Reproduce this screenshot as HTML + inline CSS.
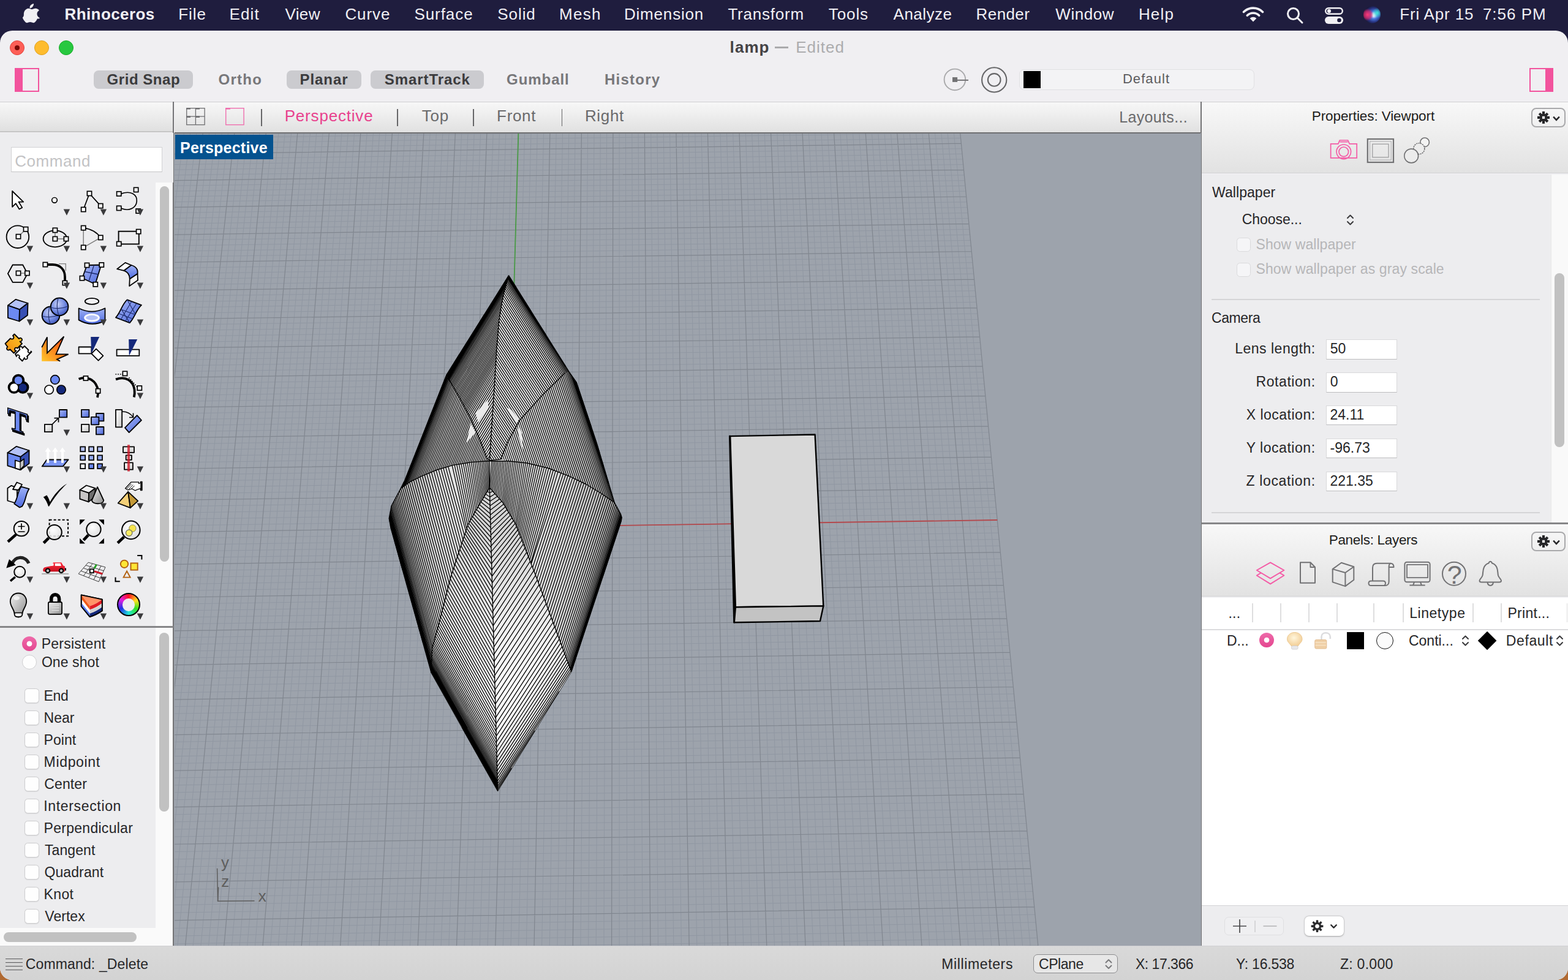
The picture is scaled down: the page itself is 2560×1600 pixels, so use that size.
<!DOCTYPE html>
<html><head><meta charset="utf-8"><title>Rhinoceros - lamp</title>
<style>
html,body{margin:0;padding:0;}
body{width:2560px;height:1600px;overflow:hidden;position:relative;background:#1f1d3e;font-family:"Liberation Sans",sans-serif;}
.t{position:absolute;white-space:pre;line-height:1;}
.b{position:absolute;box-sizing:border-box;}
svg{position:absolute;overflow:visible;}
</style></head><body>
<div class="b" style="left:0px;top:1560px;width:2560px;height:40px;background:#b06a32;"></div>
<div class="b" style="left:0px;top:50px;width:2560px;height:1550px;background:#f0eff2;border-radius:20px;"></div>
<svg style="left:38px;top:6px" width="26" height="32" viewBox="0 0 170 210"><path fill="#f1f0f4" d="M150.4 160.6c-3 7-6.600 13.400-10.700 19.300-5.600 8.100-10.300 13.700-13.800 16.800-5.500 5.100-11.500 7.700-17.800 7.900-4.600 0-10.100-1.300-16.500-3.900-6.400-2.600-12.300-3.900-17.700-3.900-5.600 0-11.700 1.300-18.200 3.900-6.500 2.600-11.700 4-15.700 4.100-6.100.3-12.200-2.400-18.200-8.100-3.900-3.400-8.700-9.200-14.600-17.400-6.200-8.800-11.400-19-15.400-30.600C7.500 136 5.400 123.800 5.400 112c0-13.500 2.900-25.100 8.700-34.900 4.600-7.800 10.700-14 18.300-18.500 7.600-4.500 15.900-6.800 24.700-7 4.900 0 11.200 1.500 19.200 4.500 7.900 3 13 4.500 15.200 4.500 1.700 0 7.300-1.800 16.900-5.300 9.100-3.300 16.700-4.600 23-4.100 17 1.400 29.800 8.100 38.300 20.200-15.200 9.200-22.700 22.100-22.600 38.700.1 12.900 4.800 23.600 14 32.100 4.200 4 8.800 7 14 9.200-1.100 3.300-2.300 6.400-3.600 9.400zM111.400 4.100c0 10.100-3.700 19.600-11.100 28.300C91.400 42.900 80.600 48.900 68.900 47.900c-.1-1.200-.2-2.500-.2-3.800 0-9.700 4.200-20.100 11.700-28.600 3.700-4.300 8.500-7.900 14.300-10.700 5.800-2.800 11.200-4.300 16.400-4.600.2 1.400.3 2.700.3 3.900z"/></svg>
<span class="t" style="left:105.50px;top:10.49px;font-size:26px;font-weight:700;color:#f1f0f4;letter-spacing:0.411px;">Rhinoceros</span>
<span class="t" style="left:291.20px;top:10.49px;font-size:26px;font-weight:400;color:#f1f0f4;letter-spacing:1.000px;">File</span>
<span class="t" style="left:374.40px;top:10.49px;font-size:26px;font-weight:400;color:#f1f0f4;letter-spacing:1.167px;">Edit</span>
<span class="t" style="left:465.40px;top:10.49px;font-size:26px;font-weight:400;color:#f1f0f4;letter-spacing:0.400px;">View</span>
<span class="t" style="left:563.40px;top:10.49px;font-size:26px;font-weight:400;color:#f1f0f4;letter-spacing:0.925px;">Curve</span>
<span class="t" style="left:676.40px;top:10.49px;font-size:26px;font-weight:400;color:#f1f0f4;letter-spacing:0.933px;">Surface</span>
<span class="t" style="left:812.30px;top:10.49px;font-size:26px;font-weight:400;color:#f1f0f4;letter-spacing:0.925px;">Solid</span>
<span class="t" style="left:912.90px;top:10.49px;font-size:26px;font-weight:400;color:#f1f0f4;letter-spacing:1.333px;">Mesh</span>
<span class="t" style="left:1018.90px;top:10.49px;font-size:26px;font-weight:400;color:#f1f0f4;letter-spacing:0.825px;">Dimension</span>
<span class="t" style="left:1188.40px;top:10.49px;font-size:26px;font-weight:400;color:#f1f0f4;letter-spacing:0.775px;">Transform</span>
<span class="t" style="left:1352.80px;top:10.49px;font-size:26px;font-weight:400;color:#f1f0f4;letter-spacing:0.900px;">Tools</span>
<span class="t" style="left:1458.60px;top:10.49px;font-size:26px;font-weight:400;color:#f1f0f4;letter-spacing:0.467px;">Analyze</span>
<span class="t" style="left:1593.60px;top:10.49px;font-size:26px;font-weight:400;color:#f1f0f4;letter-spacing:0.400px;">Render</span>
<span class="t" style="left:1723.30px;top:10.49px;font-size:26px;font-weight:400;color:#f1f0f4;letter-spacing:0.540px;">Window</span>
<span class="t" style="left:1858.90px;top:10.49px;font-size:26px;font-weight:400;color:#f1f0f4;letter-spacing:1.167px;">Help</span>
<span class="t" style="left:2285.20px;top:10.49px;font-size:26px;font-weight:400;color:#f1f0f4;letter-spacing:0.833px;">Fri Apr 15</span>
<span class="t" style="left:2420.90px;top:10.49px;font-size:26px;font-weight:400;color:#f1f0f4;letter-spacing:1.000px;">7:56 PM</span>
<svg style="left:2028px;top:10px" width="36" height="26" viewBox="0 0 36 26"><g fill="none" stroke="#f1f0f4" stroke-width="3.6" stroke-linecap="round"><path d="M2.500 9.500 A22 22 0 0 1 33.500 9.500"/><path d="M8.300 15.300 A13.800 13.800 0 0 1 27.700 15.300"/></g><path fill="#f1f0f4" d="M18 25.500 L12.600 20.100 A7.600 7.600 0 0 1 23.400 20.100 Z"/></svg>
<svg style="left:2100px;top:11px" width="28" height="28" viewBox="0 0 28 28"><g fill="none" stroke="#f1f0f4" stroke-width="3"><circle cx="11.500" cy="11.500" r="9"/><path d="M18 18 L26 26" stroke-linecap="round"/></g></svg>
<svg style="left:2163px;top:12px" width="30" height="27" viewBox="0 0 30 27"><rect x="1.200" y="1.200" width="27.600" height="9.600" rx="4.800" fill="none" stroke="#f1f0f4" stroke-width="2.400"/><circle cx="7" cy="6" r="3.100" fill="#f1f0f4"/><rect x="0" y="15" width="30" height="12" rx="6" fill="#f1f0f4"/><circle cx="23.500" cy="21" r="3.300" fill="#1f1d3e"/></svg>
<svg style="left:2226px;top:10px" width="28" height="28" viewBox="0 0 28 28"><defs><radialGradient id="si1" cx="0.6" cy="0.52" r="0.55"><stop offset="0" stop-color="#ffffff"/><stop offset="0.16" stop-color="#d9e4ff"/><stop offset="0.4" stop-color="#4a78e0"/><stop offset="0.75" stop-color="#27327e"/><stop offset="1" stop-color="#191a3c"/></radialGradient><radialGradient id="si2" cx="0.24" cy="0.5" r="0.36"><stop offset="0" stop-color="#ff3a78"/><stop offset="0.6" stop-color="#e02868" stop-opacity="0.7"/><stop offset="1" stop-color="#d02060" stop-opacity="0"/></radialGradient><radialGradient id="si3" cx="0.8" cy="0.4" r="0.3"><stop offset="0" stop-color="#40e8d8"/><stop offset="1" stop-color="#35e0d0" stop-opacity="0"/></radialGradient></defs><circle cx="14" cy="14" r="14" fill="url(#si1)"/><circle cx="14" cy="14" r="14" fill="url(#si2)"/><circle cx="14" cy="14" r="14" fill="url(#si3)"/></svg>
<div class="b" style="left:15.8px;top:65.7px;width:24px;height:24px;background:#fe5f57;border-radius:12px;border:1px solid #e0443e;"></div>
<div class="b" style="left:56.099999999999994px;top:65.7px;width:24px;height:24px;background:#febc2e;border-radius:12px;border:1px solid #dea123;"></div>
<div class="b" style="left:95.9px;top:65.7px;width:24px;height:24px;background:#28c840;border-radius:12px;border:1px solid #1aab29;"></div>
<div class="b" style="left:23.8px;top:73.7px;width:8px;height:8px;background:#7a0a06;border-radius:4px;"></div>
<span class="t" style="left:1191.60px;top:63.99px;font-size:26px;font-weight:700;color:#444345;letter-spacing:1.067px;">lamp</span>
<div class="b" style="left:1264.5px;top:76.3px;width:22.5px;height:2.6px;background:#aaaaac;"></div>
<span class="t" style="left:1299.20px;top:63.99px;font-size:26px;font-weight:400;color:#acacae;letter-spacing:1.020px;">Edited</span>
<div class="b" style="left:24px;top:111px;width:39.5px;height:38.5px;border:2.5px solid #f2539d;"></div>
<div class="b" style="left:24px;top:111px;width:12.5px;height:38.5px;background:#f2539d;"></div>
<div class="b" style="left:2497px;top:111px;width:38.5px;height:38.5px;border:2.5px solid #f2539d;"></div>
<div class="b" style="left:2523px;top:111px;width:12.5px;height:38.5px;background:#f2539d;"></div>
<div class="b" style="left:153px;top:114.8px;width:162px;height:30px;background:#cbcbcf;border-radius:8px;"></div>
<span class="t" style="left:174.60px;top:117.88px;font-size:24px;font-weight:700;color:#3b3b3d;letter-spacing:0.538px;">Grid Snap</span>
<span class="t" style="left:356.60px;top:117.88px;font-size:24px;font-weight:700;color:#77777a;letter-spacing:1.225px;">Ortho</span>
<div class="b" style="left:468px;top:114.8px;width:122px;height:30px;background:#cbcbcf;border-radius:8px;"></div>
<span class="t" style="left:489.40px;top:117.88px;font-size:24px;font-weight:700;color:#3b3b3d;letter-spacing:0.980px;">Planar</span>
<div class="b" style="left:605px;top:114.8px;width:185px;height:30px;background:#cbcbcf;border-radius:8px;"></div>
<span class="t" style="left:627.80px;top:117.88px;font-size:24px;font-weight:700;color:#3b3b3d;letter-spacing:0.933px;">SmartTrack</span>
<span class="t" style="left:827.10px;top:117.88px;font-size:24px;font-weight:700;color:#77777a;letter-spacing:0.933px;">Gumball</span>
<span class="t" style="left:986.90px;top:117.88px;font-size:24px;font-weight:700;color:#77777a;letter-spacing:1.250px;">History</span>
<svg style="left:1538px;top:108px" width="110" height="44" viewBox="1538 108 110 44"><circle cx="1558.900" cy="129.900" r="17.300" fill="none" stroke="#a9a9ab" stroke-width="1.900"/><rect x="1555" y="126.100" width="8.100" height="7.800" fill="#727274"/><path d="M1563 130.900H1581" stroke="#727274" stroke-width="2"/><circle cx="1623.200" cy="130.400" r="20.100" fill="none" stroke="#666668" stroke-width="2.100"/><circle cx="1623.200" cy="130.400" r="10.300" fill="none" stroke="#666668" stroke-width="2.100"/></svg>
<div class="b" style="left:1663.6px;top:112.8px;width:384.4px;height:34.4px;background:#f3f3f5;border:1.5px solid #e0e0e3;border-radius:8px;"></div>
<div class="b" style="left:1671px;top:116px;width:28px;height:28px;background:#000;"></div>
<span class="t" style="left:1832.90px;top:117.78px;font-size:22px;font-weight:400;color:#5c5c5e;letter-spacing:1.083px;">Default</span>
<div class="b" style="left:0px;top:165.5px;width:2560px;height:1.5px;background:#cfcfd1;"></div>
<div class="b" style="left:0px;top:167px;width:283px;height:49px;background:linear-gradient(#f7f7f7,#ececec 50%,#e0e0e0);border-bottom:2px solid #c6c6c6;"></div>
<div class="b" style="left:285px;top:167px;width:1675px;height:50px;background:linear-gradient(#f7f7f7,#ececec 50%,#e0e0e0);"></div>
<div class="b" style="left:282px;top:166px;width:2.2px;height:1378px;background:#747476;"></div>
<div class="b" style="left:1959.8px;top:166px;width:2.2px;height:1378px;background:#747476;"></div>
<svg style="left:304px;top:176px" width="32" height="29" viewBox="0 0 32 29"><g fill="none" stroke="#6e6e70" stroke-width="1.300"><rect x="0.700" y="0.700" width="29.400" height="27"/><path d="M15.400 0.700V27.700M0.700 14.200H30.100"/></g><g stroke="#6e6e70" stroke-width="2.400"><path d="M0.700 1.300H7M15.400 1.300H22M0.700 14.800H7M15.400 14.800H22"/></g></svg>
<svg style="left:368px;top:176px" width="32" height="29" viewBox="0 0 32 29"><rect x="0.700" y="0.700" width="29.400" height="27" fill="none" stroke="#ef6fae" stroke-width="1.400"/><path d="M0.700 1.400H8" stroke="#ef6fae" stroke-width="2.400"/></svg>
<div class="b" style="left:426.2px;top:178px;width:1.7px;height:27.5px;background:#666668;"></div>
<div class="b" style="left:648.2px;top:178px;width:1.7px;height:27.5px;background:#666668;"></div>
<div class="b" style="left:772.2px;top:178px;width:1.7px;height:27.5px;background:#666668;"></div>
<div class="b" style="left:916.5px;top:178px;width:1.7px;height:27.5px;background:#666668;"></div>
<span class="t" style="left:464.70px;top:176.19px;font-size:26px;font-weight:400;color:#e8418d;letter-spacing:0.810px;">Perspective</span>
<span class="t" style="left:688.70px;top:176.19px;font-size:26px;font-weight:400;color:#6a6a6c;letter-spacing:0.850px;">Top</span>
<span class="t" style="left:811.10px;top:176.19px;font-size:26px;font-weight:400;color:#6a6a6c;letter-spacing:0.675px;">Front</span>
<span class="t" style="left:954.90px;top:176.19px;font-size:26px;font-weight:400;color:#6a6a6c;letter-spacing:0.675px;">Right</span>
<span class="t" style="left:1827.30px;top:178.94px;font-size:25px;font-weight:400;color:#6a6a6c;letter-spacing:0.333px;">Layouts...</span>
<div class="b" style="left:0px;top:217px;width:254px;height:806px;background:#ededef;"></div>
<div class="b" style="left:254px;top:298px;width:26.5px;height:725px;background:#fafafa;"></div>
<div class="b" style="left:254px;top:217px;width:29px;height:81px;background:#ededef;"></div>
<div class="b" style="left:260.6px;top:304px;width:15.2px;height:613px;background:#c1c1c1;border-radius:8px;"></div>
<div class="b" style="left:17.5px;top:239.7px;width:247px;height:41px;background:#fff;border:1.5px solid #d2d2d4;border-bottom-color:#c4c4c6;"></div>
<span class="t" style="left:24.30px;top:250.19px;font-size:26px;font-weight:400;color:#c3c3c5;letter-spacing:0.533px;">Command</span>
<div class="b" style="left:0px;top:1022px;width:283px;height:3.2px;background:#868688;"></div>
<div class="b" style="left:0px;top:1025px;width:254px;height:489.5px;background:#ededef;"></div>
<div class="b" style="left:254px;top:1025px;width:28px;height:489.5px;background:#fafafa;"></div>
<div class="b" style="left:260px;top:1032.6px;width:15.8px;height:292.7px;background:#c1c1c1;border-radius:8px;"></div>
<div class="b" style="left:0px;top:1514.5px;width:282px;height:29.5px;background:#fafafa;"></div>
<div class="b" style="left:5.9px;top:1522px;width:217.3px;height:15.5px;background:#c1c1c1;border-radius:8px;"></div>
<div class="b" style="left:35.9px;top:1038.8000000000002px;width:24.2px;height:24.2px;background:radial-gradient(circle,#fff 0 4px,rgba(255,255,255,0) 4.800px),linear-gradient(#ee6aaa,#e4468f);border-radius:13px;"></div>
<div class="b" style="left:36px;top:1068.9px;width:24px;height:24px;background:#fdfdfd;border:1px solid #cfcfd1;border-radius:12px;"></div>
<span class="t" style="left:67.70px;top:1039.93px;font-size:23px;font-weight:400;color:#262628;letter-spacing:0.233px;">Persistent</span>
<span class="t" style="left:67.90px;top:1069.93px;font-size:23px;font-weight:400;color:#262628;letter-spacing:0.086px;">One shot</span>
<div class="b" style="left:40.3px;top:1124.3px;width:23.5px;height:23.4px;background:#fefefe;border:1px solid #cdcdcf;border-radius:5.500px;box-shadow:0 0.500px 1px rgba(0,0,0,0.08);"></div>
<span class="t" style="left:71.60px;top:1124.83px;font-size:23px;font-weight:400;color:#262628;letter-spacing:-0.350px;">End</span>
<div class="b" style="left:40.3px;top:1160.29px;width:23.5px;height:23.4px;background:#fefefe;border:1px solid #cdcdcf;border-radius:5.500px;box-shadow:0 0.500px 1px rgba(0,0,0,0.08);"></div>
<span class="t" style="left:71.60px;top:1160.82px;font-size:23px;font-weight:400;color:#262628;letter-spacing:-0.033px;">Near</span>
<div class="b" style="left:40.3px;top:1196.28px;width:23.5px;height:23.4px;background:#fefefe;border:1px solid #cdcdcf;border-radius:5.500px;box-shadow:0 0.500px 1px rgba(0,0,0,0.08);"></div>
<span class="t" style="left:71.60px;top:1196.81px;font-size:23px;font-weight:400;color:#262628;letter-spacing:0.025px;">Point</span>
<div class="b" style="left:40.3px;top:1232.27px;width:23.5px;height:23.4px;background:#fefefe;border:1px solid #cdcdcf;border-radius:5.500px;box-shadow:0 0.500px 1px rgba(0,0,0,0.08);"></div>
<span class="t" style="left:71.60px;top:1232.80px;font-size:23px;font-weight:400;color:#262628;letter-spacing:0.657px;">Midpoint</span>
<div class="b" style="left:40.3px;top:1268.26px;width:23.5px;height:23.4px;background:#fefefe;border:1px solid #cdcdcf;border-radius:5.500px;box-shadow:0 0.500px 1px rgba(0,0,0,0.08);"></div>
<span class="t" style="left:72.30px;top:1268.79px;font-size:23px;font-weight:400;color:#262628;letter-spacing:0.120px;">Center</span>
<div class="b" style="left:40.3px;top:1304.25px;width:23.5px;height:23.4px;background:#fefefe;border:1px solid #cdcdcf;border-radius:5.500px;box-shadow:0 0.500px 1px rgba(0,0,0,0.08);"></div>
<span class="t" style="left:71.30px;top:1304.78px;font-size:23px;font-weight:400;color:#262628;letter-spacing:0.655px;">Intersection</span>
<div class="b" style="left:40.3px;top:1340.24px;width:23.5px;height:23.4px;background:#fefefe;border:1px solid #cdcdcf;border-radius:5.500px;box-shadow:0 0.500px 1px rgba(0,0,0,0.08);"></div>
<span class="t" style="left:71.60px;top:1340.77px;font-size:23px;font-weight:400;color:#262628;letter-spacing:0.275px;">Perpendicular</span>
<div class="b" style="left:40.3px;top:1376.23px;width:23.5px;height:23.4px;background:#fefefe;border:1px solid #cdcdcf;border-radius:5.500px;box-shadow:0 0.500px 1px rgba(0,0,0,0.08);"></div>
<span class="t" style="left:72.90px;top:1376.76px;font-size:23px;font-weight:400;color:#262628;letter-spacing:0.100px;">Tangent</span>
<div class="b" style="left:40.3px;top:1412.22px;width:23.5px;height:23.4px;background:#fefefe;border:1px solid #cdcdcf;border-radius:5.500px;box-shadow:0 0.500px 1px rgba(0,0,0,0.08);"></div>
<span class="t" style="left:72.40px;top:1412.75px;font-size:23px;font-weight:400;color:#262628;letter-spacing:0.114px;">Quadrant</span>
<div class="b" style="left:40.3px;top:1448.21px;width:23.5px;height:23.4px;background:#fefefe;border:1px solid #cdcdcf;border-radius:5.500px;box-shadow:0 0.500px 1px rgba(0,0,0,0.08);"></div>
<span class="t" style="left:71.60px;top:1448.74px;font-size:23px;font-weight:400;color:#262628;letter-spacing:0.333px;">Knot</span>
<div class="b" style="left:40.3px;top:1484.2px;width:23.5px;height:23.4px;background:#fefefe;border:1px solid #cdcdcf;border-radius:5.500px;box-shadow:0 0.500px 1px rgba(0,0,0,0.08);"></div>
<span class="t" style="left:73.30px;top:1484.73px;font-size:23px;font-weight:400;color:#262628;letter-spacing:0.040px;">Vertex</span>
<div class="b" style="left:0px;top:1544px;width:2560px;height:56px;background:linear-gradient(#d9d9d9,#d3d3d3);border-top:1px solid #cfcfd3;border-radius:0 0 20px 20px;"></div>
<div class="b" style="left:8.6px;top:1564.5px;width:28.4px;height:1.5px;background:#5a5a5c;"></div>
<div class="b" style="left:8.6px;top:1570.5px;width:28.4px;height:1.5px;background:#5a5a5c;"></div>
<div class="b" style="left:8.6px;top:1576.5px;width:28.4px;height:1.5px;background:#5a5a5c;"></div>
<div class="b" style="left:8.6px;top:1582.5px;width:28.4px;height:1.5px;background:#5a5a5c;"></div>
<span class="t" style="left:41.80px;top:1562.63px;font-size:23px;font-weight:400;color:#262628;letter-spacing:0.140px;">Command: _Delete</span>
<span class="t" style="left:1537.20px;top:1563.23px;font-size:23px;font-weight:400;color:#262628;letter-spacing:0.630px;">Millimeters</span>
<div class="b" style="left:1686.7px;top:1558.2px;width:138.5px;height:30.8px;background:#e7e7e7;border:1.5px solid #8c8c8e;border-radius:7px;"></div>
<span class="t" style="left:1696.10px;top:1563.23px;font-size:23px;font-weight:400;color:#262628;letter-spacing:-0.460px;">CPlane</span>
<svg style="left:1802.500px;top:1562.700px" width="14" height="22" viewBox="0 0 14 22"><path d="M2.500 8.500L7 4L11.500 8.500M2.500 13.500L7 18L11.500 13.500" fill="none" stroke="#7a7a7c" stroke-width="2" stroke-linecap="round" stroke-linejoin="round"/></svg>
<span class="t" style="left:1854.00px;top:1563.23px;font-size:23px;font-weight:400;color:#262628;letter-spacing:-0.500px;">X: 17.366</span>
<span class="t" style="left:2017.90px;top:1563.23px;font-size:23px;font-weight:400;color:#262628;letter-spacing:-0.213px;">Y: 16.538</span>
<span class="t" style="left:2187.90px;top:1563.23px;font-size:23px;font-weight:400;color:#262628;letter-spacing:0.286px;">Z: 0.000</span>
<div class="b" style="left:1962.4px;top:167px;width:597.5999999999999px;height:116px;background:linear-gradient(#f8f8f8,#eeeeee 45%,#e2e2e2);border-bottom:1.500px solid #d2d2d4;"></div>
<span class="t" style="left:2141.80px;top:179.25px;font-size:22.5px;font-weight:400;color:#1e1e20;letter-spacing:-0.095px;">Properties: Viewport</span>
<div class="b" style="left:2500px;top:176.1px;width:55.8px;height:31.8px;border:2px solid #a9a9ab;border-radius:8px;"></div>
<svg style="left:2500px;top:176.1px" width="56" height="32" viewBox="0 0 56 32"><g fill="#262628"><circle cx="20" cy="15.9" r="6.300"/><rect x="17.9" y="5.9" width="4.200" height="20"/><rect x="10" y="13.8" width="20" height="4.200"/><rect x="17.9" y="6.300000000000001" width="4.200" height="19.200" transform="rotate(45 20 15.9)"/><rect x="17.9" y="6.300000000000001" width="4.200" height="19.200" transform="rotate(-45 20 15.9)"/></g><rect x="17.9" y="13.8" width="4.200" height="4.200" fill="#f4f4f4"/><path d="M37 15.500L41 19.800L45 15.500" fill="none" stroke="#262628" stroke-width="2.500" stroke-linecap="square" stroke-linejoin="miter"/></svg>
<svg style="left:2171px;top:226px" width="46" height="36" viewBox="2171 226 46 36"><g fill="none" stroke="#f45ba6" stroke-width="1.700"><path d="M2172.600 234.800H2184.800L2187.300 229H2200.600L2203.300 234.800H2215.200V257.800H2172.600Z"/><path d="M2187.300 231.600H2200.600"/><circle cx="2193.800" cy="247.800" r="11.800"/><circle cx="2193.800" cy="247.800" r="7.800"/></g></svg>
<svg style="left:2231px;top:225px" width="46" height="42" viewBox="2231 225 46 42"><g fill="none"><rect x="2232.800" y="227" width="42.200" height="38" stroke="#727274" stroke-width="2.200"/><rect x="2236.500" y="230.800" width="34.800" height="30.400" stroke="#b5b5b7" stroke-width="1.200"/><rect x="2240.800" y="235.200" width="26.200" height="21.600" stroke="#9a9a9c" stroke-width="1.200"/></g></svg>
<svg style="left:2290px;top:222px" width="46" height="46" viewBox="2290 222 46 46"><g fill="#ececec" stroke="#707072" stroke-width="1.600"><circle cx="2326.100" cy="232.300" r="7.300" fill="#f3f3f3"/><circle cx="2316.800" cy="242.700" r="9" stroke-dasharray="2.200 1.200"/><circle cx="2304.200" cy="254.500" r="11.400"/></g></svg>
<div class="b" style="left:1962.4px;top:284.5px;width:569.5999999999999px;height:569px;background:#ededef;"></div>
<div class="b" style="left:2532px;top:284.5px;width:28px;height:569px;background:#f9f9f9;border-left:1px solid #e8e8e8;"></div>
<div class="b" style="left:2537.9px;top:445.7px;width:15.9px;height:284.5px;background:#c1c1c1;border-radius:8px;"></div>
<span class="t" style="left:1979.10px;top:303.13px;font-size:23px;font-weight:400;color:#262628;letter-spacing:0.050px;">Wallpaper</span>
<span class="t" style="left:2027.80px;top:347.13px;font-size:23px;font-weight:400;color:#262628;letter-spacing:-0.050px;">Choose...</span>
<svg style="left:2197px;top:348px" width="14" height="22" viewBox="0 0 14 22"><path d="M3 8L7.500 3.500L12 8M3 14L7.500 18.500L12 14" fill="none" stroke="#3a3a3c" stroke-width="2" stroke-linecap="round" stroke-linejoin="round"/></svg>
<div class="b" style="left:2018.6px;top:388.3px;width:23.3px;height:23px;background:#f5f5f7;border:1px solid #dadadc;border-radius:5.500px;"></div>
<span class="t" style="left:2050.50px;top:388.43px;font-size:23px;font-weight:400;color:#b6b6b8;letter-spacing:0.062px;">Show wallpaper</span>
<div class="b" style="left:2018.6px;top:428.5px;width:23.3px;height:23px;background:#f5f5f7;border:1px solid #dadadc;border-radius:5.500px;"></div>
<span class="t" style="left:2050.50px;top:428.23px;font-size:23px;font-weight:400;color:#b6b6b8;letter-spacing:0.107px;">Show wallpaper as gray scale</span>
<div class="b" style="left:1978.4px;top:488px;width:535.6px;height:1.8px;background:#d5d5d7;"></div>
<span class="t" style="left:1978.10px;top:508.23px;font-size:23px;font-weight:400;color:#262628;letter-spacing:-0.440px;">Camera</span>
<span class="t" style="left:2016.20px;top:557.83px;font-size:23px;font-weight:400;color:#262628;letter-spacing:0.509px;">Lens length:</span>
<div class="b" style="left:2164.9px;top:554.2px;width:116.4px;height:32.4px;background:#fff;border:1px solid #d9d9db;border-bottom:1.500px solid #bdbdbf;"></div>
<span class="t" style="left:2171.70px;top:558.23px;font-size:23px;font-weight:400;color:#262628;letter-spacing:0.000px;">50</span>
<span class="t" style="left:2050.60px;top:611.78px;font-size:23px;font-weight:400;color:#262628;letter-spacing:0.550px;">Rotation:</span>
<div class="b" style="left:2164.9px;top:608.1500000000001px;width:116.4px;height:32.4px;background:#fff;border:1px solid #d9d9db;border-bottom:1.500px solid #bdbdbf;"></div>
<span class="t" style="left:2171.80px;top:612.18px;font-size:23px;font-weight:400;color:#262628;letter-spacing:0.000px;">0</span>
<span class="t" style="left:2034.70px;top:665.73px;font-size:23px;font-weight:400;color:#262628;letter-spacing:0.500px;">X location:</span>
<div class="b" style="left:2164.9px;top:662.1px;width:116.4px;height:32.4px;background:#fff;border:1px solid #d9d9db;border-bottom:1.500px solid #bdbdbf;"></div>
<span class="t" style="left:2171.50px;top:666.13px;font-size:23px;font-weight:400;color:#262628;letter-spacing:0.000px;">24.11</span>
<span class="t" style="left:2034.70px;top:719.68px;font-size:23px;font-weight:400;color:#262628;letter-spacing:0.540px;">Y location:</span>
<div class="b" style="left:2164.9px;top:716.0500000000001px;width:116.4px;height:32.4px;background:#fff;border:1px solid #d9d9db;border-bottom:1.500px solid #bdbdbf;"></div>
<span class="t" style="left:2171.60px;top:720.08px;font-size:23px;font-weight:400;color:#262628;letter-spacing:0.000px;">-96.73</span>
<span class="t" style="left:2034.50px;top:773.63px;font-size:23px;font-weight:400;color:#262628;letter-spacing:0.650px;">Z location:</span>
<div class="b" style="left:2164.9px;top:770.0px;width:116.4px;height:32.4px;background:#fff;border:1px solid #d9d9db;border-bottom:1.500px solid #bdbdbf;"></div>
<span class="t" style="left:2171.50px;top:774.03px;font-size:23px;font-weight:400;color:#262628;letter-spacing:0.000px;">221.35</span>
<div class="b" style="left:1978.4px;top:836px;width:535.6px;height:1.8px;background:#d5d5d7;"></div>
<div class="b" style="left:1962.4px;top:853px;width:597.5999999999999px;height:3.2px;background:#868688;"></div>
<div class="b" style="left:1962.4px;top:856px;width:597.5999999999999px;height:118px;background:linear-gradient(#f8f8f8,#eeeeee 45%,#e2e2e2);border-bottom:1.500px solid #d2d2d4;"></div>
<span class="t" style="left:2169.70px;top:870.65px;font-size:22.5px;font-weight:400;color:#1e1e20;letter-spacing:-0.308px;">Panels: Layers</span>
<div class="b" style="left:2500px;top:867.8px;width:55.8px;height:31.8px;border:2px solid #a9a9ab;border-radius:8px;"></div>
<svg style="left:2500px;top:867.8px" width="56" height="32" viewBox="0 0 56 32"><g fill="#262628"><circle cx="20" cy="15.9" r="6.300"/><rect x="17.9" y="5.9" width="4.200" height="20"/><rect x="10" y="13.8" width="20" height="4.200"/><rect x="17.9" y="6.300000000000001" width="4.200" height="19.200" transform="rotate(45 20 15.9)"/><rect x="17.9" y="6.300000000000001" width="4.200" height="19.200" transform="rotate(-45 20 15.9)"/></g><rect x="17.9" y="13.8" width="4.200" height="4.200" fill="#f4f4f4"/><path d="M37 15.500L41 19.800L45 15.500" fill="none" stroke="#262628" stroke-width="2.500" stroke-linecap="square" stroke-linejoin="miter"/></svg>
<svg style="left:2040px;top:910px" width="420" height="56" viewBox="2040 910 420 56"><g fill="none" stroke-width="2" stroke-linejoin="round">
<g stroke="#f45ba6" stroke-width="2"><path d="M2051.800 931L2074.100 918.400L2096.400 931L2074.100 944.300Z"/><path d="M2058.800 935.300L2051.800 939.500L2074.100 953.400L2096.400 939.500L2089.400 935.300"/></g>
<g stroke="#727274"><path d="M2123 918.300H2139.500L2147 926V951.800H2123Z"/><path d="M2139.500 918.300V926H2147"/>
<path d="M2190 918.800L2210.300 925.200L2196.400 935L2175.700 929.100Z"/><path d="M2175.700 929.100V950.400L2196.400 957.100V935M2196.400 957.100L2210.300 946.800V925.200"/>
<path d="M2241 948.400V927C2241 922.500 2243.500 919.800 2248 919.800H2270C2273.500 919.800 2275.500 922 2275.500 926H2267.600V949.500C2267.600 953.500 2265 956 2261.500 956H2238.500C2236 956 2234.500 954.300 2234.500 952.200C2234.500 950 2236 948.400 2238.500 948.400H2258C2260.500 948.400 2262 950 2262 952.200C2262 954.300 2260.500 956 2258.500 956"/><path d="M2267.600 926C2267.600 922.500 2268.500 919.800 2271 919.800"/>
<rect x="2293.400" y="917.800" width="41.200" height="32.500" rx="3.500"/><rect x="2297" y="921.800" width="34" height="21.400" stroke-width="1.800"/><path d="M2309 950.400L2307 955.600M2319 950.400L2321 955.600M2301.400 955.600H2326.700"/>
<circle cx="2374" cy="936.700" r="19"/>
<path d="M2419 950.500C2417 950.500 2415.500 949.500 2415.500 948C2415.500 946 2419 944 2420.500 939.500C2421.500 935.500 2420.500 931 2423 926C2425 922 2428.500 920 2430.500 919.500C2431.500 915.800 2435 915.800 2436 919.500C2438 920 2441.500 922 2443.500 926C2446 931 2445 935.500 2446 939.500C2447.500 944 2451 946 2451 948C2451 949.500 2449.500 950.500 2447.500 950.500Z"/><path d="M2428.500 951C2429.500 957.500 2437 957.500 2438 951"/>
</g></g></svg>
<span class="t" style="left:2362.80px;top:916.70px;font-size:43px;font-weight:400;color:#727274;letter-spacing:0.000px;">?</span>
<div class="b" style="left:1962.4px;top:975.5px;width:597.5999999999999px;height:503px;background:#fff;"></div>
<div class="b" style="left:2044.2px;top:985.4px;width:1.8px;height:30.8px;background:#dededf;"></div>
<div class="b" style="left:2090.2px;top:985.4px;width:1.8px;height:30.8px;background:#dededf;"></div>
<div class="b" style="left:2136.2999999999997px;top:985.4px;width:1.8px;height:30.8px;background:#dededf;"></div>
<div class="b" style="left:2182.2999999999997px;top:985.4px;width:1.8px;height:30.8px;background:#dededf;"></div>
<div class="b" style="left:2242.3999999999996px;top:985.4px;width:1.8px;height:30.8px;background:#dededf;"></div>
<div class="b" style="left:2290.2px;top:985.4px;width:1.8px;height:30.8px;background:#dededf;"></div>
<div class="b" style="left:2404.0px;top:985.4px;width:1.8px;height:30.8px;background:#dededf;"></div>
<div class="b" style="left:2450.2999999999997px;top:985.4px;width:1.8px;height:30.8px;background:#dededf;"></div>
<div class="b" style="left:2557.7px;top:985.4px;width:1.8px;height:30.8px;background:#dededf;"></div>
<span class="t" style="left:2005.40px;top:989.73px;font-size:23px;font-weight:400;color:#262628;letter-spacing:0.250px;">...</span>
<span class="t" style="left:2301.20px;top:989.73px;font-size:23px;font-weight:400;color:#262628;letter-spacing:0.543px;">Linetype</span>
<span class="t" style="left:2461.50px;top:989.73px;font-size:23px;font-weight:400;color:#262628;letter-spacing:0.271px;">Print...</span>
<div class="b" style="left:1962.4px;top:1027px;width:597.5999999999999px;height:1.8px;background:#dcdcde;"></div>
<span class="t" style="left:2003.00px;top:1034.73px;font-size:23px;font-weight:400;color:#262628;letter-spacing:-0.033px;">D...</span>
<div class="b" style="left:2055.7000000000003px;top:1032.7px;width:24.2px;height:24.2px;background:radial-gradient(circle,#fff 0 3.900px,rgba(255,255,255,0) 4.700px),linear-gradient(#ee6aaa,#e4468f);border-radius:13px;"></div>
<svg style="left:2100px;top:1030px" width="28" height="32" viewBox="2100 1030 28 32"><defs><radialGradient id="bu" cx="0.45" cy="0.4" r="0.6"><stop offset="0" stop-color="#fff6dc"/><stop offset="1" stop-color="#f3cf98"/></radialGradient></defs><path d="M2113.800 1032.500C2106.500 1032.500 2101.500 1037.500 2101.500 1043.500C2101.500 1048.500 2106.500 1051 2108 1054.500H2119.600C2121 1051 2126 1048.500 2126 1043.500C2126 1037.500 2121 1032.500 2113.800 1032.500Z" fill="url(#bu)" stroke="#ecc891" stroke-width="1"/><rect x="2108.500" y="1054.500" width="10.600" height="5.600" rx="2" fill="#e8e8ea" stroke="#cfcfd1" stroke-width="0.800"/></svg>
<svg style="left:2144px;top:1030px" width="32" height="32" viewBox="2144 1030 32 32"><path d="M2157.500 1046V1039.500C2157.500 1035.500 2160.500 1033.300 2164.500 1033.300C2168.500 1033.300 2171.800 1035.500 2171.800 1039.500V1043" fill="none" stroke="#dcdcde" stroke-width="2.600"/><rect x="2146.800" y="1044.500" width="19" height="14.500" rx="2" fill="#efcfa6" stroke="#e3bd90" stroke-width="1"/><path d="M2147.500 1049H2165M2147.500 1053.500H2165" stroke="#f8e3c6" stroke-width="1.500"/></svg>
<div class="b" style="left:2198.7px;top:1031.7px;width:28.6px;height:28.2px;background:#000;"></div>
<div class="b" style="left:2247.1px;top:1032.2px;width:27.6px;height:27.6px;background:#fbfbfb;border:1.800px solid #111;border-radius:14px;"></div>
<span class="t" style="left:2300.00px;top:1034.73px;font-size:23px;font-weight:400;color:#262628;letter-spacing:-0.014px;">Conti...</span>
<svg style="left:2385.400px;top:1035px" width="14" height="22" viewBox="0 0 14 22"><path d="M3 8L7.500 3.500L12 8M3 14L7.500 18.500L12 14" fill="none" stroke="#3a3a3c" stroke-width="2" stroke-linecap="round" stroke-linejoin="round"/></svg>
<svg style="left:2410px;top:1028px" width="36" height="36" viewBox="2410 1028 36 36"><path d="M2428.100 1030.700L2443.400 1046L2428.100 1061.300L2412.800 1046Z" fill="#000"/></svg>
<span class="t" style="left:2458.80px;top:1034.73px;font-size:23px;font-weight:400;color:#262628;letter-spacing:0.600px;">Default</span>
<svg style="left:2539.400px;top:1035px" width="14" height="22" viewBox="0 0 14 22"><path d="M3 8L7.500 3.500L12 8M3 14L7.500 18.500L12 14" fill="none" stroke="#3a3a3c" stroke-width="2" stroke-linecap="round" stroke-linejoin="round"/></svg>
<div class="b" style="left:1962.4px;top:1477.5px;width:597.5999999999999px;height:66.5px;background:#ededef;border-top:1.500px solid #d3d3d5;"></div>
<div class="b" style="left:1999.2px;top:1496.8px;width:97.3px;height:30.6px;background:#efeff1;border:1.500px solid #dfdfe1;border-radius:7px;"></div>
<div class="b" style="left:2048.2px;top:1502.5px;width:1.4px;height:19px;background:#d6d6d8;"></div>
<svg style="left:1999px;top:1496px" width="98" height="32" viewBox="1999 1496 98 32"><path d="M2013 1512H2035M2024 1501V1523" stroke="#4a4a4c" stroke-width="1.700"/><path d="M2062.500 1512H2084.500" stroke="#b9b9bb" stroke-width="1.700"/></svg>
<div class="b" style="left:2129.6px;top:1495.9px;width:64.7px;height:32.4px;background:#fff;border-radius:7px;box-shadow:0 0.500px 2.500px rgba(0,0,0,0.3),0 0 0 0.500px rgba(0,0,0,0.08);"></div>
<svg style="left:2129.600px;top:1495.900px" width="65" height="33" viewBox="0 0 65 33"><path d="M18.9,6.3L22.1,6.3L22.5,9.9L23.6,10.4L26.4,8.1L28.6,10.3L26.3,13.1L26.8,14.2L30.4,14.6L30.4,17.8L26.8,18.2L26.3,19.3L28.6,22.1L26.4,24.3L23.6,22.0L22.5,22.5L22.1,26.1L18.9,26.1L18.5,22.5L17.4,22.0L14.6,24.3L12.4,22.1L14.7,19.3L14.2,18.2L10.6,17.8L10.6,14.6L14.2,14.2L14.7,13.1L12.4,10.3L14.6,8.1L17.4,10.4L18.5,9.9Z M20.5,12.8a3.4,3.4 0 1 0 0.010,0Z" fill="#2b2b2d" fill-rule="evenodd"/><path d="M43.200 14.300L47.500 18.600L51.800 14.300" fill="none" stroke="#2b2b2d" stroke-width="2.300" stroke-linecap="round" stroke-linejoin="round"/></svg>
<div class="b" style="left:284px;top:217px;width:1677px;height:1327px;background:#9da3ac;"></div>
<svg style="left:285.4px;top:218px;overflow:hidden" width="1674.6" height="1326" viewBox="285.4 218 1674.6 1326"><rect x="285.4" y="218" width="1674.6" height="1326" fill="#9da3ac"/><path d="M769.9 1546.0L1694.0 1531.4M283.4 1540.9L1692.8 1518.6M283.4 1528.1L1691.6 1505.9M283.4 1515.4L1690.4 1493.2M283.4 274.3L290.6 216.0M283.4 1490.1L1688.0 1468.0M283.4 359.3L300.9 216.0M283.4 1477.5L1686.8 1455.4M283.4 446.8L311.2 216.0M283.4 1464.9L1685.6 1442.9M283.4 537.0L321.5 216.0M283.4 1452.4L1684.4 1430.5M283.4 725.6L342.1 216.0M283.4 1427.5L1682.0 1405.7M283.4 824.3L352.4 216.0M283.4 1415.2L1680.8 1393.4M283.4 926.2L362.7 216.0M283.4 1402.8L1679.6 1381.1M283.4 1031.3L373.0 216.0M283.4 1390.6L1678.5 1368.9M283.4 1252.2L393.6 216.0M283.4 1366.1L1676.1 1344.5M283.4 1368.2L403.9 216.0M283.4 1354.0L1675.0 1332.4M283.4 1488.2L414.2 216.0M283.4 1341.8L1673.8 1320.4M290.1 1546.0L424.5 216.0M283.4 1329.8L1672.7 1308.3M315.4 1546.0L445.1 216.0M283.4 1305.7L1670.4 1284.4M328.1 1546.0L455.4 216.0M283.4 1293.8L1669.2 1272.5M340.7 1546.0L465.7 216.0M283.4 1281.9L1668.1 1260.7M353.4 1546.0L476.0 216.0M283.4 1270.0L1667.0 1248.9M378.7 1546.0L496.6 216.0M283.4 1246.4L1664.7 1225.3M391.4 1546.0L506.9 216.0M283.4 1234.7L1663.6 1213.7M404.0 1546.0L517.2 216.0M283.4 1223.0L1662.5 1202.0M416.7 1546.0L527.5 216.0M283.4 1211.3L1661.4 1190.4M442.0 1546.0L548.1 216.0M283.4 1188.1L1659.2 1167.3M454.6 1546.0L558.4 216.0M283.4 1176.6L1658.1 1155.8M467.3 1546.0L568.7 216.0M283.4 1165.1L1657.0 1144.3M480.0 1546.0L579.0 216.0M283.4 1153.6L1655.9 1132.9M505.3 1546.0L599.6 216.0M283.4 1130.8L1653.7 1110.2M517.9 1546.0L609.9 216.0M283.4 1119.4L1652.6 1098.9M530.6 1546.0L620.2 216.0M283.4 1108.1L1651.5 1087.6M543.2 1546.0L630.5 216.0M283.4 1096.8L1650.5 1076.4M568.6 1546.0L651.1 216.0M283.4 1074.4L1648.3 1054.0M581.2 1546.0L661.4 216.0M283.4 1063.3L1647.3 1042.9M593.9 1546.0L671.7 216.0M283.4 1052.1L1646.2 1031.8M606.5 1546.0L682.0 216.0M283.4 1041.0L1645.1 1020.8M631.8 1546.0L702.6 216.0M283.4 1019.0L1643.0 998.8M644.5 1546.0L712.9 216.0M283.4 1008.0L1642.0 987.9M657.2 1546.0L723.2 216.0M283.4 997.1L1640.9 977.0M669.8 1546.0L733.5 216.0M283.4 986.2L1639.9 966.1M695.1 1546.0L754.1 216.0M283.4 964.5L1637.8 944.5M707.8 1546.0L764.4 216.0M283.4 953.7L1636.8 933.8M720.4 1546.0L774.7 216.0M283.4 942.9L1635.8 923.1M733.1 1546.0L785.0 216.0M283.4 932.2L1634.7 912.4M758.4 1546.0L805.6 216.0M283.4 910.8L1632.7 891.1M771.1 1546.0L815.9 216.0M283.4 900.2L1631.7 880.5M783.7 1546.0L826.2 216.0M283.4 889.6L1630.7 870.0M796.4 1546.0L836.5 216.0M283.4 879.1L1629.7 859.5M821.7 1546.0L857.1 216.0M283.4 858.1L1627.7 838.6M834.4 1546.0L867.4 216.0M283.4 847.6L1626.7 828.2M847.0 1546.0L877.7 216.0M283.4 837.2L1625.7 817.8M859.7 1546.0L888.0 216.0M283.4 826.8L1624.7 807.5M885.0 1546.0L908.6 216.0M283.4 806.2L1622.7 786.9M897.7 1546.0L918.9 216.0M283.4 795.9L1621.7 776.6M910.3 1546.0L929.2 216.0M283.4 785.7L1620.8 766.4M923.0 1546.0L939.5 216.0M283.4 775.4L1619.8 756.3M948.3 1546.0L960.1 216.0M283.4 755.1L1617.9 736.0M961.0 1546.0L970.4 216.0M283.4 745.0L1616.9 725.9M973.6 1546.0L980.7 216.0M283.4 734.9L1615.9 715.9M986.3 1546.0L991.0 216.0M283.4 724.9L1615.0 705.9M1011.6 1546.0L1011.6 216.0M283.4 704.8L1613.1 685.9M1024.3 1546.0L1021.9 216.0M283.4 694.9L1612.1 676.0M1036.9 1546.0L1032.2 216.0M283.4 685.0L1611.2 666.1M1049.6 1546.0L1042.5 216.0M283.4 675.1L1610.2 656.3M1074.9 1546.0L1063.1 216.0M283.4 655.4L1608.3 636.7M1087.6 1546.0L1073.4 216.0M283.4 645.6L1607.4 626.9M1100.2 1546.0L1083.7 216.0M283.4 635.8L1606.5 617.2M1112.9 1546.0L1094.0 216.0M283.4 626.1L1605.5 607.5M1138.2 1546.0L1114.6 216.0M283.4 606.7L1603.7 588.1M1150.9 1546.0L1124.9 216.0M283.4 597.0L1602.8 578.5M1163.6 1546.0L1135.2 216.0M283.4 587.4L1601.9 568.9M1176.2 1546.0L1145.5 216.0M283.4 577.8L1600.9 559.4M1201.5 1546.0L1166.1 216.0M283.4 558.7L1599.1 540.4M1214.2 1546.0L1176.4 216.0M283.4 549.2L1598.2 530.9M1226.9 1546.0L1186.8 216.0M283.4 539.7L1597.3 521.5M1239.5 1546.0L1197.1 216.0M283.4 530.3L1596.4 512.1M1264.9 1546.0L1217.7 216.0M283.4 511.5L1594.6 493.3M1277.5 1546.0L1228.0 216.0M283.4 502.1L1593.7 484.0M1290.2 1546.0L1238.3 216.0M283.4 492.8L1592.8 474.7M1302.8 1546.0L1248.6 216.0M283.4 483.5L1591.9 465.5M1328.2 1546.0L1269.2 216.0M283.4 465.0L1590.2 447.0M1340.8 1546.0L1279.5 216.0M283.4 455.8L1589.3 437.8M1353.5 1546.0L1289.8 216.0M283.4 446.6L1588.4 428.7M1366.2 1546.0L1300.1 216.0M283.4 437.4L1587.5 419.6M1391.5 1546.0L1320.7 216.0M283.4 419.2L1585.8 401.4M1404.1 1546.0L1331.0 216.0M283.4 410.1L1584.9 392.4M1416.8 1546.0L1341.3 216.0M283.4 401.1L1584.1 383.3M1429.5 1546.0L1351.6 216.0M283.4 392.1L1583.2 374.4M1454.8 1546.0L1372.2 216.0M283.4 374.1L1581.5 356.5M1467.5 1546.0L1382.5 216.0M283.4 365.2L1580.6 347.6M1480.1 1546.0L1392.8 216.0M283.4 356.2L1579.8 338.7M1492.8 1546.0L1403.1 216.0M283.4 347.4L1578.9 329.8M1518.1 1546.0L1423.8 216.0M283.4 329.7L1577.3 312.2M1530.8 1546.0L1434.1 216.0M283.4 320.9L1576.4 303.4M1543.5 1546.0L1444.4 216.0M283.4 312.1L1575.6 294.7M1556.1 1546.0L1454.7 216.0M283.4 303.3L1574.7 285.9M1581.5 1546.0L1475.3 216.0M283.4 285.9L1573.1 268.6M1594.1 1546.0L1485.6 216.0M283.4 277.2L1572.3 259.9M1606.8 1546.0L1495.9 216.0M283.4 268.6L1571.4 251.3M1619.4 1546.0L1506.2 216.0M283.4 259.9L1570.6 242.7M1644.8 1546.0L1526.8 216.0M283.4 242.8L1569.0 225.6M1657.4 1546.0L1537.1 216.0M283.4 234.2L1568.1 217.1M1670.1 1546.0L1547.4 216.0M283.4 225.7L1010.6 216.0M1682.8 1546.0L1557.7 216.0M283.4 217.2L371.8 216.0" fill="none" stroke="#9198a3" stroke-width="1"/><path d="M1580.0 1546.0L1695.3 1544.2M283.4 1502.7L1689.2 1480.6M283.4 629.9L331.8 216.0M283.4 1440.0L1683.2 1418.1M283.4 1139.9L383.3 216.0M283.4 1378.3L1677.3 1356.7M302.8 1546.0L434.8 216.0M283.4 1317.7L1671.5 1296.4M366.0 1546.0L486.3 216.0M283.4 1258.2L1665.9 1237.1M429.3 1546.0L537.8 216.0M283.4 1199.7L1660.3 1178.8M492.6 1546.0L589.3 216.0M283.4 1142.2L1654.8 1121.5M555.9 1546.0L640.8 216.0M283.4 1085.6L1649.4 1065.2M619.2 1546.0L692.3 216.0M283.4 1030.0L1644.1 1009.8M682.5 1546.0L743.8 216.0M283.4 975.3L1638.9 955.3M745.8 1546.0L795.3 216.0M283.4 921.5L1633.7 901.7M809.1 1546.0L846.8 216.0M283.4 868.6L1628.7 849.0M872.4 1546.0L898.3 216.0M283.4 816.5L1623.7 797.2M935.7 1546.0L949.8 216.0M283.4 765.3L1618.8 746.1M999.0 1546.0L1001.3 216.0M283.4 714.8L1614.0 695.9M1062.3 1546.0L1052.8 216.0M283.4 665.2L1609.3 646.4M1125.6 1546.0L1104.3 216.0M283.4 616.3L1604.6 597.8M1188.9 1546.0L1155.8 216.0M283.4 568.2L1600.0 549.9M1252.2 1546.0L1207.4 216.0M283.4 520.9L1595.5 502.7M1315.5 1546.0L1258.9 216.0M283.4 474.2L1591.1 456.2M1378.8 1546.0L1310.4 216.0M283.4 428.3L1586.7 410.5M1442.1 1546.0L1361.9 216.0M283.4 383.1L1582.4 365.4M1505.5 1546.0L1413.5 216.0M283.4 338.5L1578.1 321.0M1568.8 1546.0L1465.0 216.0M283.4 294.6L1573.9 277.3M1632.1 1546.0L1516.5 216.0M283.4 251.3L1569.8 234.2M1695.4 1546.0L1568.0 216.0" fill="none" stroke="#80868f" stroke-width="1.200"/><path d="M828.5 860.7L1628.7 849.0" stroke="#b4494d" stroke-width="1.800"/><path d="M828.5 860.7L846.8 216.0" stroke="#4a9b47" stroke-width="1.800"/><g stroke="#000" stroke-width="2.400" stroke-linejoin="round"><path d="M1191.600 712L1198.800 1016.300L1201.300 991.200L1193 712Z" fill="#111"/><path d="M1192.600 712.100L1331 709.500L1344.700 989.400L1201.300 991.200Z" fill="#d9d9d9"/><path d="M1201.300 991.200L1344.700 989.400L1339.400 1014L1199.200 1016.300Z" fill="#c3c3c3"/></g><defs><linearGradient id="lg1" gradientUnits="userSpaceOnUse" x1="636" y1="0" x2="1015" y2="0"><stop offset="0" stop-color="#b0b0b0"/><stop offset="0.2" stop-color="#dedede"/><stop offset="0.45" stop-color="#eeeeee"/><stop offset="0.75" stop-color="#dcdcdc"/><stop offset="1" stop-color="#b4b4b4"/></linearGradient><radialGradient id="lg2" gradientUnits="userSpaceOnUse" cx="830" cy="1120" r="260"><stop offset="0" stop-color="#ffffff"/><stop offset="0.35" stop-color="#f2f2f2"/><stop offset="1" stop-color="#d4d4d4"/></radialGradient></defs><path d="M831 450L929.5 607.2L941.6 624.4L974.3 722.4L1003.5 820.4L1013.8 839.4L1015.5 845L1014.5 851L933.2 1096.4L813 1291.2L704.6 1098.2L638.5 862L635.7 846.4L639.5 826L654.4 798L661.3 784.3L729.2 612.4Z" fill="url(#lg1)" stroke="#000" stroke-width="1.500" stroke-linejoin="round"/><path d="M799.7 796.3L821.2 820.4L841.8 854.8L858 896L875.2 940L904 1018L933.2 1096.4L813 1291.2L704.6 1098.2L705.9 1059L716 1022L731.8 960L737 940L750 900L764.7 856L774.6 838.3L786.2 818.4Z" fill="url(#lg2)"/><path d="M750.7 578.1L729.4 612.8M791 513.9L729.9 613.5M831 450L730.3 614.3M830.2 452.9L730.8 615.1M829.2 456.4L731.3 616M828.1 460.3L731.9 617.1M826.8 464.8L732.7 618.3M825.4 469.8L733.5 619.7M823.9 475.2L734.3 621.2M822.3 480.8L735.3 622.8M821.5 485.7L736.3 624.5M820.5 490.8L737.4 626.4M819.5 496.1L738.5 628.3M818.5 501.7L739.7 630.3M817.5 507.4L740.9 632.4M816.7 512.8L742.1 634.5M816 518.3L743.4 636.6M815.2 523.8L744.6 638.8M814.7 528.9L745.9 641M814.3 533.9L747.2 643.2M813.8 538.9L748.5 645.4M813.4 543.9L749.8 647.6M813 548.8L751 649.9M812.6 553.8L752.3 652.2M812.2 558.8L753.5 654.5M811.8 563.8L754.7 656.8M811.4 568.8L756 659.1M811 573.7L757.2 661.4M810.7 578.4L758.4 663.7M810.4 583.2L759.6 666M810.1 588.1L760.9 668.4M809.8 593.2L762.2 670.8M809.5 598.5L763.6 673.4M809.2 603.9L765 676M808.8 609.5L766.4 678.7M808.5 615.3L767.9 681.5M808.1 621.4L769.5 684.4M807.7 627.6L770.9 687.6M807.3 634.1L772.4 691M806.8 640.8L773.9 694.5M806.4 647.6L775.4 698.1M806 654.5L777 701.7M805.5 661.3L778.5 705.3M805.1 668.2L780.1 708.9M804.6 675L781.6 712.5M804.2 681.9L783.2 716.1M803.7 688.7L784.7 719.8M803.3 695.6L786.1 723.6M802.8 702.4L787.5 727.4M802.4 709.2L789 731.2M802 716.1L790.4 735M801.5 722.9L791.8 738.7M801.1 729.8L793.3 742.5M800.7 736.6L794.7 746.3M800.2 743.4L796.7 749.2M799.8 750.3L799.2 751.2M830.9 450.5L843.2 469.4M830.6 451.5L867.5 508.3M830.3 452.6L892.2 547.6M829.9 453.9L923.9 598.3M829.4 455.5L928.4 607.5M828.9 457.5L926.8 607.9M828.3 459.7L925.1 608.3M827.6 462.1L923.1 608.8M826.8 464.9L921.4 610.2M825.9 467.9L919.7 611.9M825 471.1L917.9 613.7M824.1 474.5L915.9 615.6M823 478.1L913.8 617.6M822.1 482.1L911.7 619.7M821.3 486.5L909.5 621.9M820.5 491L907.2 624.1M819.6 495.5L904.9 626.4M818.8 500.1L902.5 628.7M817.9 504.8L900.2 631.1M817.2 509.6L897.8 633.4M816.5 514.5L895.4 635.7M815.8 519.4L893.1 638.1M815.1 524.3L890.7 640.4M814.6 529.5L888.3 642.7M814.2 534.8L886 645M813.7 540.1L883.7 647.5M813.3 545.4L881.5 650M812.9 550.6L879.2 652.5M812.4 555.9L877 655M812 561.2L874.7 657.5M811.6 566.5L872.5 660M811.1 571.8L870.2 662.5M810.8 577.2L867.9 665M810.5 582.7L865.7 667.5M810.1 588.1L863.4 670M809.8 593.6L861.2 672.5M809.5 599L858.9 675M809.1 604.5L856.7 677.5M808.8 609.9L854.4 680M808.5 615.4L852.2 682.5M808.1 620.8L849.9 685M807.8 626.2L847.9 687.8M807.4 631.6L846.1 691M807.1 637.1L844.3 694.2M806.7 642.5L842.5 697.4M806.4 647.9L840.7 700.6M806 653.3L839 703.9M805.7 658.7L837.2 707.1M805.3 664.1L835.4 710.3M805 669.5L833.6 713.5M804.6 675L831.8 716.7M804.3 680.4L830 719.9M803.9 685.8L828.5 723.6M803.6 691.2L827 727.3M803.2 696.6L825.6 730.9M802.9 702L824.1 734.6M802.5 707.5L822.6 738.3M802.2 712.9L821.1 741.9M801.8 718.3L819.6 745.6M801.5 723.7L818.1 749.3M801.1 729.2L814.9 750.3M800.8 734.6L811.2 750.6M800.4 740L807.5 750.9M800.1 745.4L803.9 751.2M799.7 750.8L800.2 751.6M656.4 794L655 797.6M660.1 786.6L656.1 796.7M729.5 613L657.3 795.9M730.1 613.9L658.6 794.9M730.8 615.1L660.2 793.7M731.5 616.4L662 792.4M732.4 617.9L664.2 790.8M733.4 619.6L666.5 789.1M734.5 621.5L669.1 787.2M735.7 623.6L671.7 785.7M737 625.7L674.3 784.4M738.3 628.1L677.1 783M739.8 630.5L680.1 781.6M741.3 633.1L683.2 780.1M742.8 635.7L686.4 778.6M744.4 638.5L689.7 777M746.1 641.3L693 775.7M747.7 644.1L696.3 774.3M749.4 647L699.7 772.9M751.1 650L703.1 771.5M752.7 653.1L706.5 770.1M754.4 656.2L709.9 768.7M756 659.2L713.3 767.3M757.7 662.3L716.6 766.3M759.3 665.4L719.8 765.3M760.9 668.4L723 764.4M762.6 671.5L726.2 763.5M764.2 674.5L729.4 762.6M765.9 677.6L732.7 761.6M767.5 680.7L735.9 760.7M769.1 683.7L739.1 759.8M770.7 687.1L742.2 759.1M772.1 690.5L745.2 758.6M773.6 694L748.3 758.1M775.1 697.4L751.3 757.6M776.6 700.9L754.4 757.1M778.1 704.3L757.4 756.6M779.6 707.8L760.5 756.1M781.1 711.2L763.5 755.7M782.6 714.7L766.6 755.2M784 718.1L769.6 754.7M785.4 721.8L772.5 754.4M786.8 725.5L775.5 754.2M788.2 729.2L778.4 754M789.6 732.9L781.3 753.8M791 736.5L784.3 753.6M792.4 740.2L787.2 753.3M793.8 743.9L790.2 753.1M795.2 747.6L793.1 752.9M797.2 749.6L796 752.7M799.4 751.4L799 752.3M940.8 623.2L965.6 696.5M939.2 620.9L979.3 739.1M937.4 618.4L985.7 760.8M935.1 615.2L994.1 789M932.4 611.3L1003.3 820.3M929.3 607.3L1001.1 818.7M927.5 607.7L998.5 817M925.5 608.2L995.7 815M923.2 608.8L992.5 812.8M921.1 610.4L989.1 810.5M919 612.5L985.4 808M916.8 614.7L981.5 805.3M914.5 617L977.6 802.9M912.1 619.3L973.6 800.5M909.6 621.7L969.5 798M907.2 624.2L965.3 795.5M904.7 626.6L961.1 793M902.2 629.1L957 790.5M899.7 631.5L953 788.6M897.2 634L949 786.7M894.7 636.5L945.1 784.8M892.2 638.9L941.1 782.9M889.7 641.4L937.1 781M887.2 643.8L933.2 779.1M884.8 646.4L929.2 777.3M882.3 649.1L925.4 775.8M879.9 651.7L921.5 774.3M877.5 654.4L917.7 772.9M875.1 657.1L913.9 771.4M872.7 659.8L910.1 769.9M870.2 662.4L906.2 768.4M867.8 665.1L902.4 767M865.4 667.8L898.6 765.5M863 670.5L894.8 764.2M860.6 673.1L891.2 763.3M858.2 675.8L887.6 762.5M855.7 678.5L884 761.6M853.3 681.2L880.3 760.7M850.9 683.9L876.7 759.8M848.5 686.6L873.1 759M846.5 690.3L869.5 758.1M844.4 694.1L865.8 757.2M842.3 697.8L862.2 756.3M840.3 701.5L858.7 755.8M838.2 705.2L855.2 755.4M836.1 708.9L851.8 755.1M834.1 712.7L848.3 754.7M832 716.4L844.9 754.3M830 720.1L841.5 754M828.1 724.6L838 753.6M826.3 729L834.6 753.3M824.5 733.5L831.1 752.9M822.7 738L827.6 752.2M820.9 742.4L823.9 751.4M819.1 746.9L820.3 750.6M637.7 857.6L657.7 930.7M636.3 849.9L691.4 1050.9M635.9 845.5L704.6 1096.8M636.2 843.8L704.7 1094.1M636.6 841.6L704.8 1090.9M637.1 839.1L705 1087.1M637.6 836.2L705.1 1082.8M638.2 833L705.3 1078M638.9 829.5L705.4 1072.7M639.6 825.8L705.6 1066.8M640.9 823.3L705.9 1060.4M642.3 820.7L706.7 1056M643.8 817.9L707.9 1051.8M645.4 814.9L709.1 1047.4M647.1 811.7L710.3 1042.7M648.9 808.4L711.7 1037.8M650.7 804.9L713.1 1032.6M652.7 801.2L714.6 1027.2M654.8 797.7L716.1 1021.5M657.5 795.7L717.7 1015.5M660.3 793.7L719.3 1009.2M663.1 791.6L720.9 1002.7M666.1 789.4L722.6 996M669.1 787.2L724.4 989.1M672.3 785.4L726.2 982M675.7 783.7L728 974.8M679.1 782.1L729.9 967.5M682.6 780.4L731.8 960M686.2 778.7L733.8 952.5M689.8 777L735.7 944.8M693.5 775.5L737.8 937.4M697.2 773.9L740.1 930.5M701 772.4L742.4 923.5M704.8 770.8L744.7 916.4M708.6 769.2L747 909.3M712.4 767.7L749.3 902.2M716.3 766.3L751.6 895.2M720.3 765.2L753.9 888.2M724.2 764.1L756.3 881.2M728.1 762.9L758.6 874.2M732.1 761.8L760.9 867.2M738.6 759.9L762 862M742.4 759.1L764 857.5M746.1 758.5L766.2 853.3M749.8 757.9L768.5 849.2M753.3 757.3L770.7 845.2M756.8 756.7L772.9 841.3M760.1 756.2L775 837.6M763.4 755.7L777.2 833.9M766.6 755.1L779.2 830.3M769.8 754.6L781.3 826.8M772.8 754.4L783.3 823.4M775.8 754.2L785.2 820.1M778.7 754L787.1 816.9M781.6 753.8L789 813.8M784.3 753.6L790.9 810.7M787.1 753.4L792.7 807.8M789.7 753.2L794.5 804.9M792.3 753L796.2 802M794.8 752.8L797.9 799.3M797.2 752.6L799.5 796.6M1014.9 848.4L984.2 942.4M1015.4 844.5L933.1 1096.2M1014.9 843.2L932.7 1095M1014.4 841.4L932.1 1093.4M1013.7 839.3L931.4 1091.4M1012.7 837.4L930.5 1089.1M1011.6 835.3L929.5 1086.5M1010.2 832.8L928.4 1083.5M1008.8 830.1L927.1 1080.1M1007.2 827.2L925.8 1076.4M1005.4 824L924.3 1072.4M1003.5 820.5L922.7 1068.1M1000.9 818.6L920.9 1063.5M998.2 816.7L919.1 1058.7M995.3 814.7L917.2 1053.6M992.2 812.7L915.3 1048.2M989.1 810.5L913.2 1042.7M985.8 808.3L911.1 1037M982.5 806L908.9 1031.2M979.1 803.8L906.7 1025.3M975.5 801.6L904.4 1019.2M971.9 799.5L902.2 1013.1M968.3 797.3L899.9 1006.9M964.7 795.2L897.6 1000.7M961.1 793L895.3 994.5M957.5 790.8L893 988.3M953.8 789L890.7 982.1M950.1 787.2L888.4 975.9M946.4 785.4L886.2 969.7M942.6 783.7L883.9 963.5M938.9 781.9L881.6 957.3M935.2 780.1L879.3 951.1M931.4 778.3L877 944.9M927.6 776.7L874.7 938.7M923.8 775.2L872.4 932.7M920 773.7L870 926.7M916.2 772.3L867.7 920.7M911.4 770.4L867 919M907.5 768.9L865.2 914.3M903.7 767.5L863.4 909.8M900 766L861.6 905.2M896.3 764.6L859.9 900.7M892.7 763.7L858.1 896.3M889 762.8L856.4 892M885.5 762L854.7 887.7M882 761.1L853.1 883.5M878.5 760.3L851.4 879.3M875.1 759.5L849.8 875.2M871.8 758.6L848.2 871.1M868.4 757.8L846.6 867.1M865.2 757.1L845.1 863.1M861.9 756.3L843.5 859.2M858.7 755.8L842 855.4M855.6 755.5L840 851.8M852.5 755.1L837.9 848.4M849.4 754.8L835.9 844.9M846.4 754.5L833.9 841.6M843.4 754.2L831.9 838.3M840.5 753.9L829.9 835M837.6 753.6L828 831.8M834.7 753.3L826.1 828.6M831.9 753L824.2 825.4M829.1 752.8L822.3 822.3M826.4 752.8L820.3 819.4M823.6 752.7L818 816.8M821 752.7L815.7 814.2M818.3 752.7L813.4 811.6M815.7 752.7L811.1 809.1M813.1 752.6L808.9 806.6M810.6 752.6L806.7 804.2M808.1 752.6L804.5 801.7M805.6 752.6L802.4 799.3M803.2 752.5L800.3 797M799.8 798.3L798.8 797.8M799.9 804.7L796 802.3M800.1 811.2L793.3 806.8M800.3 817.9L790.6 811.2M800.5 824.7L788 815.4M800.6 831.6L785.5 819.6M800.8 838.8L783.1 823.7M801 846.1L780.7 827.8M801.2 853.5L778.4 831.7M801.4 861.2L776.2 835.6M801.7 869.1L774 839.4M801.9 877.2L771.9 843.2M802.1 885.5L769.8 846.9M802.3 894.1L767.7 850.6M802.6 902.9L765.7 854.2M802.8 911.9L764 858.1M803.1 921.2L762.5 862.5M803.3 930.7L761.1 866.9M803.6 940.4L759.6 871.4M803.8 950.3L758 876M804.1 960.4L756.4 880.8M804.4 970.7L754.7 885.8M804.7 981L753 891.1M804.9 991.4L751.1 896.7M805.2 1001.7L749.1 902.6M805.5 1012L747.1 908.9M805.8 1022.2L745.1 915M806 1032.3L743.1 921.1M806.3 1042.2L741.2 927.1M806.6 1052L739.3 933M806.8 1061.7L737.4 938.9M807.1 1071.2L735.7 945M807.3 1080.6L734.1 951.2M807.6 1089.9L732.5 957.2M807.8 1099L731 963.2M808.1 1107.9L729.5 969M808.3 1116.7L728 974.8M808.5 1125.3L726.6 980.4M808.8 1133.7L725.2 986M809 1142L723.8 991.4M809.2 1150.1L722.4 996.7M809.4 1158L721.1 1001.9M809.6 1165.7L719.8 1007M809.8 1173.2L718.6 1011.9M810 1180.5L717.4 1016.7M810.2 1187.6L716.2 1021.4M810.4 1194.5L715 1025.8M810.6 1201.2L713.8 1030.1M810.8 1207.7L712.6 1034.3M810.9 1214L711.5 1038.3M811.1 1220L710.5 1042.2M811.2 1225.8L709.5 1046M811.4 1231.5L708.5 1049.6M811.5 1236.8L707.5 1053M811.7 1242L706.6 1056.3M811.8 1246.9L705.9 1059.6M811.9 1251.5L705.7 1063.8M812.1 1256L705.6 1067.8M812.2 1260.1L705.5 1071.6M812.3 1264.1L705.4 1075.1M812.4 1267.8L705.3 1078.4M812.5 1271.2L705.2 1081.5M812.5 1274.4L705.1 1084.4M812.6 1277.3L705 1087M812.7 1279.9L704.9 1089.4M812.8 1282.3L704.8 1091.5M812.8 1284.4L704.8 1093.4M812.9 1286.3L704.7 1095.1M812.9 1287.9L704.7 1096.5M812.9 1289.2L704.6 1097.7M813 1290.4L754.5 1187.1M799.8 798.3L800.9 797.7M799.9 804.8L804.8 802M800.1 811.6L808.6 806.3M800.3 818.5L812.3 810.5M800.5 825.7L816 814.6M800.7 833.1L819.6 818.6M800.9 840.7L822.7 823M801.1 848.5L825.5 827.5M801.3 856.6L828.2 832.1M801.5 864.9L830.9 836.6M801.8 873.5L833.6 841.1M802 882.3L836.2 845.5M802.3 891.3L838.9 850M802.5 900.7L841.6 854.4M802.8 910.3L843.7 859.6M803 920.2L845.8 865M803.3 930.5L848 870.4M803.6 941L850.2 876.1M803.9 951.8L852.5 882M804.2 963L854.9 888.2M804.5 974.5L857.5 894.7M804.8 986.2L860.2 901.6M805.1 997.9L863 908.8M805.4 1009.6L866 916.4M805.7 1021.3L868.9 924M806.1 1033L871.9 931.6M806.4 1044.7L874.9 939.2M806.7 1056.4L877.8 946.9M807 1068.1L880.6 954.7M807.3 1079.7L883.5 962.5M807.6 1091.4L886.4 970.2M807.9 1103.1L889.2 978M808.3 1114.8L892.1 985.7M808.6 1126.5L895 993.5M808.9 1138.1L897.8 1001.2M809.2 1149.4L900.6 1008.7M809.5 1160.5L903.3 1016M809.8 1171.3L905.9 1023.2M810.1 1181.8L908.5 1030.2M810.3 1192L911 1036.9M810.6 1201.9L913.5 1043.4M810.9 1211.3L915.8 1049.7M811.1 1220.4L918 1055.7M811.3 1229L920.2 1061.4M811.5 1237.2L922.2 1066.8M811.8 1244.9L924.1 1071.9M811.9 1252.1L925.9 1076.7M812.1 1258.7L927.5 1081.1M812.3 1264.8L929 1085.1M812.4 1270.4L930.4 1088.8M812.6 1275.3L931.6 1092.1M812.7 1279.7L932.7 1095M812.8 1283.4L913.3 1128.6M812.9 1286.5L873.7 1192.9M813 1289.4L835.8 1254.2" fill="none" stroke="#000" stroke-width="1.300"/><path d="M777 674.6L796.9 652.2L797.7 664.6L781.2 689.5ZM768.8 691.1L777 706L762.2 722.5ZM825.8 664.6L835.8 669.6L847.3 684.5L844 691.1ZM845.7 691.1L852.3 706L854 734.1L847.3 712.6Z" fill="#e9e9e9"/><path d="M704.6 1098.2L813 1291.2L809 1278L713 1096Z" fill="#000" opacity="0.6"/><path d="M831 450L822.5 480L817.7 506L815 525L811.1 572L808.2 620L806.9 640L803 700L799.7 751.6L799.7 796.3L813 1291.2M654.4 798L670 786.5L688.8 777.4L714 767L740.4 759.4L770 754.6L798.8 752.5L830 752.8L860.8 756L896 764.5L929.5 777.4L957 790.5L981.1 805L1003.5 820.4M729.2 612.4L750 648L769.6 684.6L784 718L795.4 748.2L799.7 751.6M922.7 608.9L886 645L848.7 686.3L830 720L817.8 750L799.7 751.6M704.6 1098.2L705.9 1059L716 1022L731.8 960L737 940L750 900L764.7 856L774.6 838.3L786.2 818.4L799.7 796.3L821.2 820.4L841.8 854.8L858 896L875.2 940L904 1018L933.2 1096.4" fill="none" stroke="#000" stroke-width="1.400" stroke-linejoin="round"/><g stroke="#5e5e5e" stroke-width="1.500" fill="none"><path d="M355 1417.700L356 1471.200L415.900 1470.800"/><path d="M356 1471.200L357 1448.400"/></g></svg>
<span class="t" style="left:421.70px;top:1450.29px;font-size:26px;font-weight:400;color:#5e5e5e;letter-spacing:0.000px;">x</span>
<span class="t" style="left:361.00px;top:1394.79px;font-size:26px;font-weight:400;color:#5e5e5e;letter-spacing:0.000px;">y</span>
<span class="t" style="left:361.30px;top:1426.49px;font-size:26px;font-weight:400;color:#5e5e5e;letter-spacing:0.000px;">z</span>
<div class="b" style="left:285.4px;top:216px;width:1674.6px;height:2.4px;background:#6f6f71;"></div>
<div class="b" style="left:286.2px;top:220px;width:159.8px;height:39.6px;background:#04528f;"></div>
<span class="t" style="left:294.00px;top:229.34px;font-size:25px;font-weight:700;color:#fff;letter-spacing:0.220px;">Perspective</span>
<svg style="left:0;top:298px" width="254" height="724" viewBox="0 298 254 724"><defs>
<linearGradient id="ib" x1="0" y1="0" x2="1" y2="1"><stop offset="0" stop-color="#a9b9f6"/><stop offset="1" stop-color="#4a66dc"/></linearGradient>
<linearGradient id="ibv" x1="0" y1="0" x2="0" y2="1"><stop offset="0" stop-color="#9fb2f5"/><stop offset="1" stop-color="#4e6ae0"/></linearGradient>
<linearGradient id="iw" x1="0" y1="0" x2="1" y2="1"><stop offset="0" stop-color="#ffffff"/><stop offset="1" stop-color="#c8c8c8"/></linearGradient>
<radialGradient id="isph" cx="0.4" cy="0.35" r="0.7"><stop offset="0" stop-color="#c4cef6"/><stop offset="0.6" stop-color="#7088e0"/><stop offset="1" stop-color="#3c54b8"/></radialGradient>
<linearGradient id="ior" x1="0" y1="1" x2="1" y2="0"><stop offset="0" stop-color="#ffc62a"/><stop offset="0.55" stop-color="#fa7a1c"/><stop offset="1" stop-color="#ee3a14"/></linearGradient>
<linearGradient id="ipz" x1="0" y1="1" x2="1" y2="0"><stop offset="0" stop-color="#f08a10"/><stop offset="1" stop-color="#ffc628"/></linearGradient>
<linearGradient id="igr" x1="0" y1="0" x2="1" y2="1"><stop offset="0" stop-color="#f2f2f2"/><stop offset="1" stop-color="#8c8c8c"/></linearGradient>
<linearGradient id="ird" x1="0" y1="0" x2="0" y2="1"><stop offset="0" stop-color="#ff3040"/><stop offset="1" stop-color="#c81020"/></linearGradient>
<radialGradient id="ilens" cx="0.4" cy="0.35" r="0.7"><stop offset="0" stop-color="#ffffff"/><stop offset="1" stop-color="#dedede"/></radialGradient>
</defs><path d="M20.100 312V337.800L25.800 332.200L31.500 341.500L36.200 338.900L30.500 329.600H38.200Z" fill="#fff" stroke="#000" stroke-width="1.800" stroke-linejoin="round" stroke-width="2"/><circle cx="89" cy="326.800" r="4.300" fill="#fff" stroke="#000" stroke-width="1.700"/><path d="M103.7 341.5h10.4l-5.200 10.300z" fill="#3a3a3c"/><path d="M136.200 342L146 315.900L164.300 336.100" fill="none" stroke="#000" stroke-width="1.700"/><rect x="142.4" y="312.3" width="7.2" height="7.2" fill="#fff" stroke="#000" stroke-width="1.700"/><rect x="160.7" y="332.5" width="7.2" height="7.2" fill="#fff" stroke="#000" stroke-width="1.700"/><rect x="132.6" y="338.4" width="7.2" height="7.2" fill="#fff" stroke="#000" stroke-width="1.700"/><path d="M163.7 341.5h10.4l-5.200 10.300z" fill="#3a3a3c"/><path d="M197.500 316.400C214 310.500 224 318 223.300 328.500C222.500 340 210 345.500 197.500 340" fill="none" stroke="#000" stroke-width="1.700"/><rect x="190.6" y="312.8" width="7.2" height="7.2" fill="#fff" stroke="#000" stroke-width="1.700"/><rect x="218.5" y="306.3" width="7.2" height="7.2" fill="#fff" stroke="#000" stroke-width="1.700"/><rect x="190.6" y="336.3" width="7.2" height="7.2" fill="#fff" stroke="#000" stroke-width="1.700"/><rect x="222.1" y="341.0" width="7.2" height="7.2" fill="#fff" stroke="#000" stroke-width="1.700"/><path d="M223.7 341.5h10.4l-5.200 10.300z" fill="#3a3a3c"/><circle cx="28.900" cy="386.700" r="18.300" fill="none" stroke="#000" stroke-width="1.800"/><path d="M30 386.200L42.100 374.200" stroke="#777" stroke-width="1.400"/><rect x="26.4" y="382.6" width="7.2" height="7.2" fill="#fff" stroke="#000" stroke-width="1.700"/><rect x="38.5" y="370.6" width="7.2" height="7.2" fill="#fff" stroke="#000" stroke-width="1.700"/><path d="M43.7 401.5h10.4l-5.200 10.300z" fill="#3a3a3c"/><ellipse cx="89.900" cy="389.800" rx="19.300" ry="13.500" fill="none" stroke="#000" stroke-width="1.800"/><path d="M89.900 375.900V390H108" fill="none" stroke="#777" stroke-width="1.400"/><rect x="86.3" y="372.3" width="7.2" height="7.2" fill="#fff" stroke="#000" stroke-width="1.700"/><rect x="86.3" y="386.4" width="7.2" height="7.2" fill="#fff" stroke="#000" stroke-width="1.700"/><rect x="104.4" y="386.4" width="7.2" height="7.2" fill="#fff" stroke="#000" stroke-width="1.700"/><path d="M103.7 401.5h10.4l-5.200 10.300z" fill="#3a3a3c"/><path d="M136.200 372.100V404L164.300 387.900" fill="none" stroke="#777" stroke-width="1.400"/><path d="M136.200 372.100Q155 374.500 164.300 387.900" fill="none" stroke="#000" stroke-width="1.800"/><rect x="132.6" y="368.5" width="7.2" height="7.2" fill="#fff" stroke="#000" stroke-width="1.700"/><rect x="160.7" y="384.3" width="7.2" height="7.2" fill="#fff" stroke="#000" stroke-width="1.700"/><rect x="132.6" y="400.4" width="7.2" height="7.2" fill="#fff" stroke="#000" stroke-width="1.700"/><path d="M163.7 401.5h10.4l-5.200 10.300z" fill="#3a3a3c"/><rect x="193.600" y="377.700" width="33.200" height="20.800" fill="none" stroke="#000" stroke-width="1.900"/><rect x="222.6" y="374.5" width="7.2" height="7.2" fill="#fff" stroke="#000" stroke-width="1.700"/><rect x="190.6" y="394.5" width="7.2" height="7.2" fill="#fff" stroke="#000" stroke-width="1.700"/><path d="M223.7 401.5h10.4l-5.200 10.300z" fill="#3a3a3c"/><path d="M12.900 446.800L20.700 432.500H37.200L44.900 446.800L37.200 460.900H20.700Z" fill="none" stroke="#000" stroke-width="1.800"/><path d="M30 446H44" stroke="#777" stroke-width="1.400"/><rect x="26.4" y="442.4" width="7.2" height="7.2" fill="#fff" stroke="#000" stroke-width="1.700"/><rect x="40.8" y="442.4" width="7.2" height="7.2" fill="#fff" stroke="#000" stroke-width="1.700"/><path d="M43.7 461.5h10.4l-5.200 10.300z" fill="#3a3a3c"/><path d="M96 430.700H107.300V442" fill="none" stroke="#808080" stroke-width="1.300"/><path d="M77 432H86C98 432 106 440 106 452V459" fill="none" stroke="#000" stroke-width="3.800"/><rect x="70.3" y="428.4" width="7.2" height="7.2" fill="#fff" stroke="#000" stroke-width="1.700"/><rect x="102.3" y="458.4" width="7.2" height="7.2" fill="#fff" stroke="#000" stroke-width="1.700"/><path d="M103.7 461.5h10.4l-5.200 10.300z" fill="#3a3a3c"/><path d="M142 433L165.300 432.500L155.500 464L134.300 454Z" fill="url(#ib)" stroke="#000" stroke-width="1.800" stroke-linejoin="round"/><path d="M153.500 432.800L145 459M138.300 443.500L160.500 448" stroke="#1c2a6a" stroke-width="1.300"/><rect x="138.4" y="429.4" width="7.2" height="7.2" fill="#fff" stroke="#000" stroke-width="1.700"/><rect x="162.2" y="428.9" width="7.2" height="7.2" fill="#fff" stroke="#000" stroke-width="1.700"/><rect x="152.2" y="460.7" width="7.2" height="7.2" fill="#fff" stroke="#000" stroke-width="1.700"/><rect x="130.4" y="450.6" width="7.2" height="7.2" fill="#fff" stroke="#000" stroke-width="1.700"/><path d="M163.7 461.5h10.4l-5.200 10.300z" fill="#3a3a3c"/><path d="M191.100 439.200L204.500 428.900L214.400 433L202.500 441.800Z" fill="#fff" stroke="#000" stroke-width="1.800" stroke-linejoin="round"/><path d="M202.500 441.800L214.400 433C222 435 225.500 440 224.500 447L211.800 455.500C211.800 449 209 444 202.500 441.800Z" fill="url(#ibv)" stroke="#000" stroke-width="1.800" stroke-linejoin="round"/><path d="M211.800 455.500L224.500 447L225 457.500L211.200 467Z" fill="#f4f4f4" stroke="#000" stroke-width="1.800" stroke-linejoin="round"/><path d="M223.7 461.5h10.4l-5.200 10.300z" fill="#3a3a3c"/><path d="M12.900 498.600L25.800 488.800L45.500 495L32 505.400Z" fill="#b4c2f6" stroke="#000" stroke-width="1.800" stroke-linejoin="round"/><path d="M12.900 498.600L32 505.400L31.500 524.500L12.900 518.800Z" fill="#6c8af2" stroke="#000" stroke-width="1.800" stroke-linejoin="round"/><path d="M32 505.400L45.500 495L44.900 514.700L31.500 524.500Z" fill="#3850b4" stroke="#000" stroke-width="1.800" stroke-linejoin="round"/><path d="M43.7 521.5h10.4l-5.200 10.300z" fill="#3a3a3c"/><circle cx="83" cy="514.900" r="14.300" fill="url(#isph)" stroke="#000" stroke-width="2"/><path d="M69 516Q83 520 97 514M81 500.700Q77 515 82 529" fill="none" stroke="#22306e" stroke-width="1.200"/><circle cx="97.100" cy="500.900" r="14.300" fill="url(#isph)" stroke="#000" stroke-width="2"/><path d="M83 502Q97 506 111 500M95 486.700Q91 501 96 515" fill="none" stroke="#22306e" stroke-width="1.200"/><path d="M103.7 521.5h10.4l-5.200 10.300z" fill="#3a3a3c"/><ellipse cx="150" cy="491.900" rx="11.200" ry="5" fill="#f2f2f4" stroke="#000" stroke-width="1.800"/><path d="M128.600 503.300Q150 514 171.500 503.300V523.400Q150 535 128.600 522.400Z" fill="url(#ibv)" stroke="#000" stroke-width="1.800" stroke-linejoin="round"/><ellipse cx="150" cy="518.800" rx="11.400" ry="5.400" fill="#b4c2f8" stroke="#fff" stroke-width="2.800"/><path d="M163.7 521.5h10.4l-5.200 10.300z" fill="#3a3a3c"/><path d="M189 518.300C197 510 199 497 207.600 489.300L230.900 498.100C222 506 220 519 211.800 527.100Z" fill="url(#ib)" stroke="#000" stroke-width="1.800" stroke-linejoin="round"/><path d="M198.500 505.500L221.500 514M215 492L197 522M223 495.200L204.500 524.500M194 512L216.500 520.500M207.600 489.300L221.500 514M198.500 505.500L211.800 527.100" fill="none" stroke="#1c2a6a" stroke-width="1.100"/><path d="M223.7 521.5h10.4l-5.200 10.300z" fill="#3a3a3c"/><g stroke="#000" stroke-width="1.800" stroke-linejoin="round"><path d="M8.500 561L17 552.500C18.500 554 21 554 22 552.500C23 551 22 549 21 548L23.500 545.500L31 553C32.500 551 35.500 551.500 36 554C36.500 556.500 34 558 32.500 557.500L36 561L28.500 568.500C27 567 24.500 567.500 24 569.500C23.500 571.500 25 573 26.500 572.500L22.500 576.500L16.500 570.500C15 572 12.500 572 11.500 570.500C10.500 569 11 567 12.500 566.500Z" fill="url(#ipz)"/><path d="M25 578L32.500 570.500C31 569 31.500 566.500 33.500 566C35.500 565.500 37 567 36.500 568.500L40 565L46.500 571.500C45 573 45.500 575.500 47.500 576C49.500 576.500 51 575 50.500 573.500L51.500 574.500L44 582C45.500 583.500 45 586 43 586.500C41 587 39.500 585.500 40 584L36.500 589.500L31 584C32.500 582.500 32 580 30 579.500C28 579 26.500 580.500 27 582Z" fill="#fff"/></g><path d="M68.200 589.700V567L77 550.500V576.300L104.300 549.400L91.400 578.400H111.600L93 586.600L98.100 589.700Z" fill="url(#ior)"/><path d="M68.200 567L77 550.500V576.300L104.300 549.400L91.400 578.400H111.600L93 586.600L98.100 589.700" fill="none" stroke="#000" stroke-width="1.800" stroke-linejoin="miter"/><rect x="128.600" y="566.500" width="20.700" height="10.800" fill="#fff" stroke="#000" stroke-width="1.800" stroke-linejoin="round" stroke-width="2"/><path d="M149.300 577.300L157 569.600L168.400 580.900L160.600 588.700Z" fill="#fff" stroke="#000" stroke-width="1.800" stroke-linejoin="round" stroke-width="2"/><path d="M148.200 549.900H162.200L149.300 577.300Z" fill="#14287a"/><rect x="190.600" y="570.600" width="36.700" height="10.300" fill="#fff" stroke="#000" stroke-width="1.800" stroke-linejoin="round" stroke-width="2"/><path d="M210.200 554.100H224.200L210.700 580.900Z" fill="#14287a"/><g stroke="#000" stroke-width="4.500"><circle cx="22.900" cy="632.600" r="8" fill="#fff"/><circle cx="37.200" cy="632.600" r="8" fill="#14287a"/><circle cx="30" cy="620.900" r="8" fill="#6a88f2"/></g><circle cx="22.900" cy="632.600" r="6.400" fill="#fff"/><circle cx="37.200" cy="632.600" r="6.400" fill="#14287a"/><circle cx="30" cy="620.900" r="6.400" fill="#6a88f2"/><path d="M43.7 641.5h10.4l-5.200 10.300z" fill="#3a3a3c"/><g stroke="#000" stroke-width="1.700"><circle cx="89.900" cy="619.900" r="7.200" fill="#6a88f2"/><circle cx="80.100" cy="636.200" r="7.200" fill="#fff"/><circle cx="100" cy="636.200" r="7.200" fill="#14287a"/></g><path d="M128.600 618.800C144 613 158 622 160 638C160.500 642 160 645.500 159 649" fill="none" stroke="#000" stroke-width="3.800"/><rect x="136.4" y="614.0" width="7.2" height="7.2" fill="#fff" stroke="#000" stroke-width="1.700"/><rect x="156.5" y="634.7" width="7.2" height="7.2" fill="#fff" stroke="#000" stroke-width="1.700"/><path d="M189 619.400C206 613.500 217 622 219.500 636C220 640 220 644 218.800 648.500" fill="none" stroke="#000" stroke-width="3.800"/><path d="M188.500 611H200M210.500 616.500L225 633" stroke="#000" stroke-width="1.700" stroke-dasharray="1.700 2"/><rect x="200.4" y="606.3" width="7.2" height="7.2" fill="#fff" stroke="#000" stroke-width="1.700"/><rect x="224.2" y="630.0" width="7.2" height="7.2" fill="#fff" stroke="#000" stroke-width="1.700"/><path d="M223.7 641.5h10.4l-5.200 10.300z" fill="#3a3a3c"/><g transform="matrix(1 0.330 0 1 0 -9.500)"><text x="13.500" y="706.500" font-family="Liberation Serif,serif" font-weight="700" font-size="50" fill="#1c2a6a" stroke="#000" stroke-width="2.200">T</text><text x="12" y="704" font-family="Liberation Serif,serif" font-weight="700" font-size="50" fill="#6a88f2" stroke="#000" stroke-width="1.600">T</text></g><rect x="72.900" y="692.800" width="12.400" height="12.400" fill="url(#iw)" stroke="#000" stroke-width="1.800" stroke-linejoin="round"/><rect x="96.900" y="669" width="12.400" height="12.400" fill="url(#ib)" stroke="#000" stroke-width="1.800" stroke-linejoin="round"/><path d="M85.500 692.500L95.500 682.500M88.500 682.700H95.500V689.500" fill="none" stroke="#000" stroke-width="1.700"/><path d="M103.7 701.5h10.4l-5.200 10.300z" fill="#3a3a3c"/><rect x="133" y="668.800" width="12.400" height="12.400" fill="url(#ib)" stroke="#000" stroke-width="1.800" stroke-linejoin="round"/><rect x="133" y="692.800" width="12.400" height="12.400" fill="url(#iw)" stroke="#000" stroke-width="1.800" stroke-linejoin="round"/><rect x="157" y="675" width="12.400" height="12.400" fill="url(#ib)" stroke="#000" stroke-width="1.800" stroke-linejoin="round"/><rect x="149" y="680.900" width="12.400" height="12.400" fill="url(#ib)" stroke="#000" stroke-width="1.800" stroke-linejoin="round"/><rect x="157" y="697" width="12.400" height="12.400" fill="url(#ib)" stroke="#000" stroke-width="1.800" stroke-linejoin="round"/><rect x="189" y="668.800" width="10.200" height="28.600" fill="url(#iw)" stroke="#000" stroke-width="1.800" stroke-linejoin="round"/><path d="M204 698.400L223.700 678.200L230.900 686L210.700 706.100Z" fill="url(#ib)" stroke="#000" stroke-width="1.800" stroke-linejoin="round"/><path d="M200 672C207 672 213 675 217.500 681M211 681.500H217.500V674.500" fill="none" stroke="#000" stroke-width="1.600"/><path d="M12.400 739.200L26.900 728.800L47.500 735.500L33.600 745.900Z" fill="#b4c2f6" stroke="#000" stroke-width="1.800" stroke-linejoin="round"/><path d="M12.400 739.200L33.600 745.900V767.100L12.400 760.300Z" fill="#6c8af2" stroke="#000" stroke-width="1.800" stroke-linejoin="round"/><path d="M33.600 745.900L47.500 735.500V756.700L33.600 767.100Z" fill="#3850b4" stroke="#000" stroke-width="1.800" stroke-linejoin="round"/><path d="M24.800 751.500L33 754L39 749.500V760.500L33.600 767.100L24.800 764.300Z" fill="#fff" stroke="#000" stroke-width="1.800" stroke-linejoin="round" stroke-width="1.500"/><path d="M33 754V766.500L39 760.500V749.500Z" fill="#c4c4c4" stroke="#000" stroke-width="1.200"/><path d="M43.7 761.5h10.4l-5.200 10.300z" fill="#3a3a3c"/><path d="M68.700 761.400L76.400 750.500H111.600L102.800 761.400Z" fill="#7c96f4" stroke="#000" stroke-width="1.800" stroke-linejoin="round" stroke-width="2"/><g fill="#fff"><path d="M76.200 755.700V737.500H73.300L78.200 730.400L83.100 737.500H80.200V755.700Z"/><path d="M88.100 755.700V737.500H85.200L90.100 730.400L95 737.500H92.100V755.700Z"/><path d="M100 755.700V737.500H97.100L102 730.400L106.900 737.500H104V755.700Z"/></g><path d="M103.7 761.5h10.4l-5.200 10.300z" fill="#3a3a3c"/><rect x="131.29999999999998" y="729.4" width="7.800" height="7.800" fill="#b4c2f8" stroke="#000" stroke-width="1.800"/><rect x="145.2" y="729.4" width="7.800" height="7.800" fill="#b4c2f8" stroke="#000" stroke-width="1.800"/><rect x="159.2" y="729.4" width="7.800" height="7.800" fill="#b4c2f8" stroke="#000" stroke-width="1.800"/><rect x="131.29999999999998" y="743.4" width="7.800" height="7.800" fill="#94aaf5" stroke="#000" stroke-width="1.800"/><rect x="145.2" y="743.4" width="7.800" height="7.800" fill="#94aaf5" stroke="#000" stroke-width="1.800"/><rect x="159.2" y="743.4" width="7.800" height="7.800" fill="#94aaf5" stroke="#000" stroke-width="1.800"/><rect x="131.29999999999998" y="757.3000000000001" width="7.800" height="7.800" fill="#f4f4f4" stroke="#000" stroke-width="1.800"/><rect x="145.2" y="757.3000000000001" width="7.800" height="7.800" fill="#6a88f2" stroke="#000" stroke-width="1.800"/><rect x="159.2" y="757.3000000000001" width="7.800" height="7.800" fill="#6a88f2" stroke="#000" stroke-width="1.800"/><path d="M163.7 761.5h10.4l-5.200 10.300z" fill="#3a3a3c"/><rect x="201" y="729.400" width="18" height="9.400" fill="url(#iw)" stroke="#000" stroke-width="1.800" stroke-linejoin="round"/><rect x="205.700" y="743.400" width="9.200" height="7.400" fill="url(#iw)" stroke="#000" stroke-width="1.800" stroke-linejoin="round"/><rect x="203.100" y="755.300" width="13.800" height="11.400" fill="url(#iw)" stroke="#000" stroke-width="1.800" stroke-linejoin="round"/><rect x="208" y="726.200" width="4" height="43.400" fill="#d01828" opacity="0.78"/><path d="M223.7 761.5h10.4l-5.200 10.300z" fill="#3a3a3c"/><path d="M12.400 797L18.600 792.800L27.900 796.500V822L12.400 817.500Z" fill="#f6f6f6" stroke="#000" stroke-width="1.800" stroke-linejoin="round"/><path d="M21 799L27.500 787.500L36 791L30 800Z" fill="#fff" stroke="#000" stroke-width="1.800" stroke-linejoin="round" stroke-width="1.500"/><path d="M23.200 822.500C30 812 28 803 34.600 794.600L47.500 798.200C41 808 43 816 36.200 826.600L32 828.500Z" fill="url(#ibv)" stroke="#000" stroke-width="1.800" stroke-linejoin="round"/><path d="M43.7 821.5h10.4l-5.200 10.300z" fill="#3a3a3c"/><path d="M70.800 811.600L76.400 808.500C78.500 811.500 80.300 815.500 81.600 819.400C88 808 97.500 796.500 109.500 789.400C98 800 88 813 80 826.800H79C77 820.500 74.500 815.500 70.800 811.600Z" fill="#000"/><path d="M103.7 821.5h10.4l-5.200 10.300z" fill="#3a3a3c"/><path d="M130.400 800L141 792.500L155.500 797.200L145.100 804.900Z" fill="#f0f0f0" stroke="#000" stroke-width="1.800" stroke-linejoin="round"/><path d="M130.400 800L145.100 804.900L144.600 819.400L130.400 814.700Z" fill="#c8c6c6" stroke="#000" stroke-width="1.800" stroke-linejoin="round"/><path d="M145.100 804.900L155.500 797.200L155 811.100L144.600 819.400Z" fill="#6e6e6e" stroke="#000" stroke-width="1.800" stroke-linejoin="round"/><path d="M159.100 795.100L149.900 817C151 824 168.500 824 169.300 817Z" fill="url(#igr)" stroke="#000" stroke-width="1.800" stroke-linejoin="round"/><path d="M163.7 821.5h10.4l-5.200 10.300z" fill="#3a3a3c"/><path d="M209.200 802.900L192.700 821.500L212.800 829.200Z" fill="#f4d078" stroke="#000" stroke-width="1.800" stroke-linejoin="round"/><path d="M209.200 802.900L212.800 829.200L225.200 817.800Z" fill="#c49a38" stroke="#000" stroke-width="1.800" stroke-linejoin="round"/><path d="M204.500 797.500L214 787.200H226.500V789.500L229.500 788.500V786.300H232V800.500H229.500V797.500L226 798.500L220.500 800.800L215.500 798L209 800Z" fill="#fff" stroke="#000" stroke-width="1.300" stroke-linejoin="round"/><rect x="229.300" y="786.300" width="2.700" height="14.200" fill="#000"/><path d="M207 798L214.500 790M210 799L217 791.500M213.500 799L219.500 793" stroke="#000" stroke-width="1"/><path d="M223.7 821.5h10.4l-5.200 10.300z" fill="#3a3a3c"/><path d="M26.300 872.600L12.900 884.500" stroke="#000" stroke-width="4.600"/><circle cx="34.900" cy="863.100" r="12.200" fill="url(#ilens)" stroke="#000" stroke-width="2"/><path d="M29.500 859.500H40.500M35 854.500V864.500M29.500 868H40.500" stroke="#000" stroke-width="1.700"/><rect x="80.600" y="848.800" width="30.500" height="26.400" fill="none" stroke="#000" stroke-width="2" stroke-dasharray="4 3"/><path d="M79.500 878.300L71.300 886.500" stroke="#000" stroke-width="4.600"/><circle cx="88.800" cy="869" r="12" fill="url(#ilens)" fill-opacity="0.85" stroke="#000" stroke-width="2"/><path d="M130.200 848.300H138.900L130.200 857.100ZM161.200 848.300H169.900V857.100ZM130.200 878.800V887.600H138.900ZM169.900 878.800V887.600H161.200Z" fill="#000"/><path d="M144.100 873.600L136.400 881.900" stroke="#000" stroke-width="4.600"/><circle cx="152.900" cy="864.300" r="11.700" fill="url(#ilens)" stroke="#000" stroke-width="2"/><path d="M202.500 876.700L192.100 886.500" stroke="#000" stroke-width="4.600"/><circle cx="213.800" cy="865.400" r="14.800" fill="url(#ilens)" stroke="#000" stroke-width="2"/><circle cx="216.400" cy="862.600" r="5.700" fill="#f6e44c" stroke="#8a8a60" stroke-width="1"/><circle cx="210.700" cy="870" r="5.200" fill="#fbee62" stroke="#6a6a5a" stroke-width="1.200"/><path d="M47 919.800C44 913 38 910 32 910.500C26 911 22 914.500 19.600 920.800" fill="none" stroke="#222" stroke-width="5.200"/><path d="M10.300 927.500L15 913.100L25.800 922.400Z" fill="#000"/><path d="M24.800 942L17 948.700" stroke="#000" stroke-width="3.600"/><circle cx="32.200" cy="933.700" r="9" fill="url(#ilens)" stroke="#000" stroke-width="2"/><path d="M43.7 941.5h10.4l-5.200 10.300z" fill="#3a3a3c"/><path d="M68.200 936.800H112.100" stroke="#a8a8a8" stroke-width="1.800"/><rect x="104" y="927.500" width="4" height="4" fill="#000"/><path d="M70.200 930.600C70.500 927.500 71.500 926.700 74 926L85.700 923.400L86.800 918.200H100.200L103.300 923.400L105.900 924.400V933.200H71.300C70.500 932.500 70.200 931.500 70.200 930.600Z" fill="url(#ird)"/><path d="M89.900 919.800H98.700L99.900 923.900H89.900Z" fill="#fff"/><path d="M82.500 924L87.500 919.500V923.500Z" fill="#fff"/><g fill="#b8b8b8" stroke="#000" stroke-width="2"><circle cx="78" cy="931.700" r="3.300"/><circle cx="100" cy="931.700" r="3.300"/></g><path d="M103.7 941.5h10.4l-5.200 10.300z" fill="#3a3a3c"/><path d="M128.1 936.8L161.2 949.7M128.1 936.8L144.1 918.2M132.1 932.1L163.9 943.8M136.4 940.0L151.1 920.2M136.1 927.5L166.6 937.9M144.6 943.2L158.1 922.1M140.1 922.9L169.3 931.9M152.9 946.5L165.0 924.0M144.1 918.2L172.0 926.0M161.2 949.7L172.0 926.0" fill="none" stroke="#3c3c3c" stroke-width="1"/><path d="M153.900 928L157.500 921.800" stroke="#1ea01e" stroke-width="2.800"/><path d="M153.900 932.700L167.400 936.800" stroke="#d01828" stroke-width="2.800"/><rect x="146.800" y="929.200" width="6" height="6" fill="#fff" stroke="#000" stroke-width="1.800"/><path d="M163.7 941.5h10.4l-5.200 10.300z" fill="#3a3a3c"/><g stroke="#b2600e" stroke-width="1.900"><circle cx="203" cy="920.800" r="6.200" fill="#ffe636"/><rect x="213.500" y="919.400" width="11.200" height="11.200" fill="#ffe636"/><path d="M207.100 932.500L201.600 942.600H212.600Z" fill="none"/></g><path d="M224.200 907.100H231.400V913.600M188.500 942.500V949.200H195.800" fill="none" stroke="#000" stroke-width="2"/><path d="M223.7 941.5h10.4l-5.200 10.300z" fill="#3a3a3c"/><path d="M30 968.500C21 968.500 16.800 975.500 16.800 982C16.800 990 22.500 994 23.300 1000.500L24 1004.500C25.500 1008.500 34.500 1008.500 36 1004.500L36.700 1000.500C37.500 994 43.200 990 43.200 982C43.200 975.500 39 968.500 30 968.500Z" fill="url(#igr)" stroke="#000" stroke-width="1.800" stroke-linejoin="round" stroke-width="2"/><path d="M24 1000.500H36V1004.500C34.500 1007.800 25.500 1007.800 24 1004.500Z" fill="#f4f4f4" stroke="#000" stroke-width="1.300"/><ellipse cx="27" cy="976.500" rx="5" ry="3.200" fill="#fff" opacity="0.7"/><path d="M43.7 1001.5h10.4l-5.200 10.300z" fill="#3a3a3c"/><path d="M83.700 984V978C83.700 973.500 86.500 970.900 90.100 970.900C93.700 970.900 96.600 973.500 96.600 978V984" fill="none" stroke="#000" stroke-width="5.600"/><rect x="78.900" y="983" width="22.200" height="19.800" rx="2.200" fill="url(#igr)" stroke="#000" stroke-width="1.800" stroke-linejoin="round" stroke-width="2"/><path d="M84.500 988H96.500M84.500 992.300H96.500M84.500 996.600H96.500" stroke="#d8d8d8" stroke-width="1.800"/><path d="M103.7 1001.5h10.4l-5.200 10.300z" fill="#3a3a3c"/><path d="M132.700 971.400L166.800 978.700V997.200C160 1002 153 1005 146.700 1007.100L132.700 990Z" fill="#fff" stroke="#000" stroke-width="1.800" stroke-linejoin="round" stroke-width="2"/><path d="M132.700 971.400L166.800 978.700C161 983.500 154 987 146.700 989.500Z" fill="#ff9468"/><path d="M132.700 971.400L146.700 989.500V995.500L132.700 977.500Z" fill="#f05a18"/><path d="M146.700 989.500C154 987 161 983.500 166.800 978.700V984.700C161 989.500 154 993 146.700 995.500Z" fill="#e01c24"/><path d="M132.700 984L146.700 1001.500V1007.100L132.700 990Z" fill="#5a7cf0"/><path d="M146.700 1001.500C154 999 161 995.500 166.800 990.700V997.200C160 1002 153 1005 146.700 1007.100Z" fill="#14287a"/><path d="M146.700 995.500C154 993 161 989.500 166.800 984.700V990.700C161 995.500 154 999 146.700 1001.500Z" fill="#d4d4d4"/><path d="M132.700 971.400L166.800 978.700V997.200C160 1002 153 1005 146.700 1007.100L132.700 990Z" fill="none" stroke="#000" stroke-width="1.800" stroke-linejoin="round" stroke-width="2"/><path d="M163.7 1001.5h10.4l-5.200 10.300z" fill="#3a3a3c"/></svg>
<div class="b" style="left:191.1px;top:968.3px;width:38.2px;height:38.2px;border-radius:50%;background:conic-gradient(from 0deg,#ff1020,#ffe020 17%,#30e020 33%,#20e8d8 50%,#2030e8 67%,#e020e0 84%,#ff1020);border:2.400px solid #000;"></div>
<div class="b" style="left:199.89999999999998px;top:977.1px;width:20.6px;height:20.6px;border-radius:50%;background:#ededef;"></div>
<svg style="left:0;top:298px" width="254" height="724" viewBox="0 298 254 724"><path d="M223.7 1001.5h10.4l-5.200 10.300z" fill="#3a3a3c"/></svg>
</body></html>
